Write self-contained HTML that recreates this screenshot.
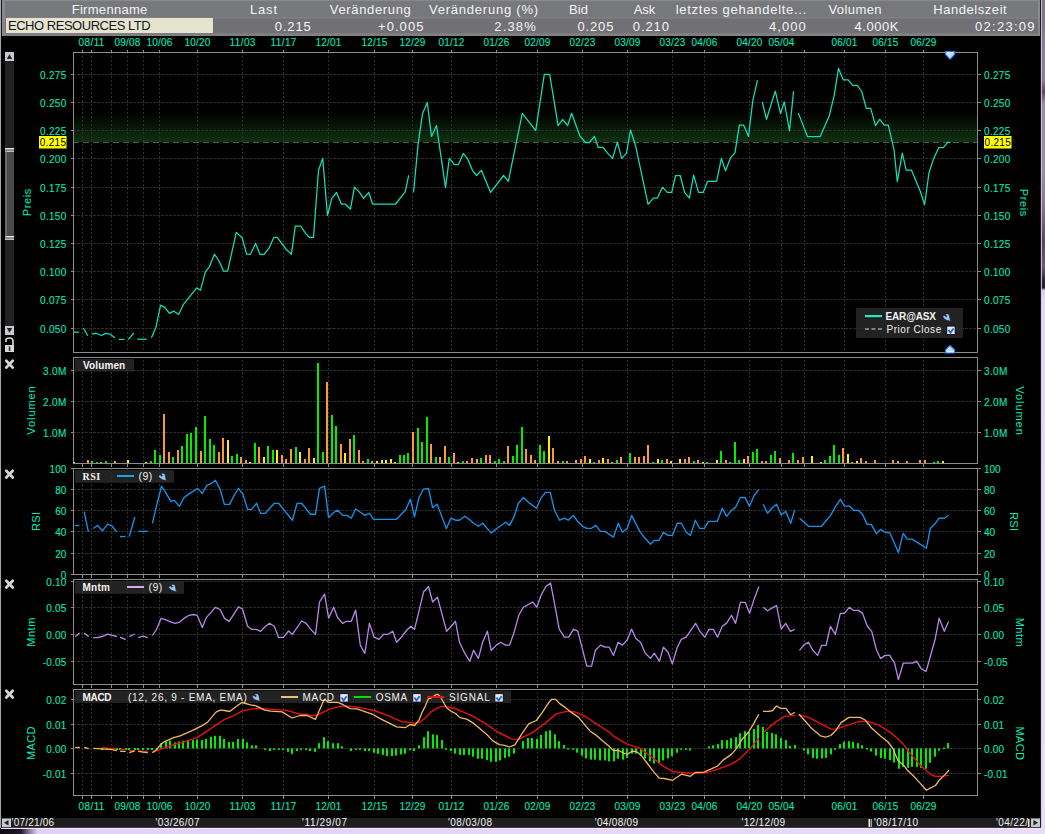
<!DOCTYPE html>
<html><head><meta charset="utf-8"><style>
html,body{margin:0;padding:0;background:#000;width:1045px;height:834px;overflow:hidden}
svg{display:block}
</style></head><body>
<svg width="1045" height="834" viewBox="0 0 1045 834">
<rect x="0" y="0" width="1045" height="834" fill="#000"/>
<defs><linearGradient id="rs" x1="0" y1="0" x2="0" y2="1"><stop offset="0" stop-color="#7a7880"/><stop offset="0.036" stop-color="#7e7888"/><stop offset="0.045" stop-color="#8a7c98"/><stop offset="0.095" stop-color="#8c7e9a"/><stop offset="0.11" stop-color="#5e4864"/><stop offset="0.125" stop-color="#9a8eaa"/><stop offset="0.2" stop-color="#9a8eaa"/><stop offset="0.24" stop-color="#8a7a98"/><stop offset="0.29" stop-color="#5a4462"/><stop offset="0.32" stop-color="#6a5a74"/><stop offset="0.337" stop-color="#2a2032"/><stop offset="0.345" stop-color="#241c2c"/><stop offset="0.348" stop-color="#d8c8f0"/><stop offset="0.36" stop-color="#e4d8f8"/><stop offset="1" stop-color="#e8def8"/></linearGradient><linearGradient id="gb" x1="0" y1="0" x2="0" y2="1"><stop offset="0" stop-color="#0f300f" stop-opacity="0"/><stop offset="1" stop-color="#0f320f" stop-opacity="1"/></linearGradient><linearGradient id="bs" x1="0" y1="0" x2="1" y2="0"><stop offset="0" stop-color="#0a0610"/><stop offset="0.02" stop-color="#201830"/><stop offset="0.028" stop-color="#8878a0"/><stop offset="0.036" stop-color="#e0d0f8"/><stop offset="1" stop-color="#e8dcf8"/></linearGradient></defs>
<rect x="1040" y="0" width="5" height="834" fill="url(#rs)"/>
<rect x="1040" y="0" width="1" height="828" fill="#1c1a22"/>
<rect x="1041" y="0" width="1" height="834" fill="#d4cce0" opacity="0.85"/>
<rect x="0" y="828" width="1045" height="6" fill="url(#bs)"/>
<rect x="0" y="0" width="1" height="828" fill="#aaa6b2"/>
<rect x="1" y="0" width="1" height="36" fill="#1a1820"/>
<rect x="2" y="0" width="1038" height="36" fill="#88898d"/>
<rect x="5" y="1.2" width="1033" height="16.3" fill="#77787c"/>
<rect x="5" y="17.5" width="1033" height="1" fill="#808084"/>
<rect x="5" y="18.5" width="1033" height="14.5" fill="#717175"/>
<rect x="5" y="33" width="1033" height="2.5" fill="#7e7e82"/>
<rect x="6" y="18" width="207" height="15" fill="#e6e4cc"/>
<text x="109.5" y="14" font-family="Liberation Sans" font-size="13" fill="#f4f4f4" text-anchor="middle" font-weight="normal" textLength="75.7" lengthAdjust="spacing" >Firmenname</text>
<text x="263.5" y="14" font-family="Liberation Sans" font-size="13" fill="#f4f4f4" text-anchor="middle" font-weight="normal" textLength="27" lengthAdjust="spacing" >Last</text>
<text x="370.3" y="14" font-family="Liberation Sans" font-size="13" fill="#f4f4f4" text-anchor="middle" font-weight="normal" textLength="81" lengthAdjust="spacing" >Veränderung</text>
<text x="483.5" y="14" font-family="Liberation Sans" font-size="13" fill="#f4f4f4" text-anchor="middle" font-weight="normal" textLength="109.2" lengthAdjust="spacing" >Veränderung (%)</text>
<text x="578.5" y="14" font-family="Liberation Sans" font-size="13" fill="#f4f4f4" text-anchor="middle" font-weight="normal" textLength="18.8" lengthAdjust="spacing" >Bid</text>
<text x="644.5" y="14" font-family="Liberation Sans" font-size="13" fill="#f4f4f4" text-anchor="middle" font-weight="normal" textLength="21.4" lengthAdjust="spacing" >Ask</text>
<text x="741" y="14" font-family="Liberation Sans" font-size="13" fill="#f4f4f4" text-anchor="middle" font-weight="normal" textLength="130.5" lengthAdjust="spacing" >letztes gehandelte...</text>
<text x="855" y="14" font-family="Liberation Sans" font-size="13" fill="#f4f4f4" text-anchor="middle" font-weight="normal" textLength="53.1" lengthAdjust="spacing" >Volumen</text>
<text x="970" y="14" font-family="Liberation Sans" font-size="13" fill="#f4f4f4" text-anchor="middle" font-weight="normal" textLength="73.4" lengthAdjust="spacing" >Handelszeit</text>
<text x="310.7" y="31" font-family="Liberation Sans" font-size="13" fill="#f4f4f4" text-anchor="end" font-weight="normal" textLength="35.9" lengthAdjust="spacing" >0.215</text>
<text x="423.4" y="31" font-family="Liberation Sans" font-size="13" fill="#f4f4f4" text-anchor="end" font-weight="normal" textLength="45.4" lengthAdjust="spacing" >+0.005</text>
<text x="535.7" y="31" font-family="Liberation Sans" font-size="13" fill="#f4f4f4" text-anchor="end" font-weight="normal" textLength="41.4" lengthAdjust="spacing" >2.38%</text>
<text x="613.4" y="31" font-family="Liberation Sans" font-size="13" fill="#f4f4f4" text-anchor="end" font-weight="normal" textLength="35.9" lengthAdjust="spacing" >0.205</text>
<text x="669" y="31" font-family="Liberation Sans" font-size="13" fill="#f4f4f4" text-anchor="end" font-weight="normal" textLength="36.2" lengthAdjust="spacing" >0.210</text>
<text x="805.7" y="31" font-family="Liberation Sans" font-size="13" fill="#f4f4f4" text-anchor="end" font-weight="normal" textLength="36.7" lengthAdjust="spacing" >4,000</text>
<text x="898.3" y="31" font-family="Liberation Sans" font-size="13" fill="#f4f4f4" text-anchor="end" font-weight="normal" textLength="43.7" lengthAdjust="spacing" >4.000K</text>
<text x="1034.5" y="31" font-family="Liberation Sans" font-size="13" fill="#f4f4f4" text-anchor="end" font-weight="normal" textLength="59.4" lengthAdjust="spacing" >02:23:09</text>
<text x="8" y="30" font-family="Liberation Sans" font-size="13" fill="#141428" text-anchor="start" font-weight="normal" textLength="142.7" lengthAdjust="spacing" >ECHO RESOURCES LTD</text>
<rect x="74" y="112" width="903" height="30" fill="url(#gb)"/>
<path d="M82.5,53 V352.5 M91.5,53 V352.5 M111.5,53 V352.5 M127.5,53 V352.5 M143.5,53 V352.5 M159.5,53 V352.5 M197.5,53 V352.5 M242.5,53 V352.5 M283.5,53 V352.5 M328.5,53 V352.5 M374.5,53 V352.5 M412.5,53 V352.5 M451.5,53 V352.5 M496.5,53 V352.5 M537.5,53 V352.5 M582.5,53 V352.5 M627.5,53 V352.5 M672.5,53 V352.5 M704.5,53 V352.5 M749.5,53 V352.5 M781.5,53 V352.5 M804.5,53 V352.5 M844.5,53 V352.5 M885.5,53 V352.5 M923.5,53 V352.5" stroke="#303030" stroke-width="1" stroke-dasharray="2,2" stroke-dashoffset="1" shape-rendering="crispEdges" fill="none"/>
<path d="M74,74.5 H977 M74,102.5 H977 M74,130.5 H977 M74,158.5 H977 M74,187.5 H977 M74,215.5 H977 M74,243.5 H977 M74,271.5 H977 M74,299.5 H977 M74,328.5 H977" stroke="#2c2c2c" stroke-width="1" stroke-dasharray="3,1" stroke-dashoffset="1" shape-rendering="crispEdges" fill="none"/>
<path d="M82.5,358 V463.5 M91.5,358 V463.5 M111.5,358 V463.5 M127.5,358 V463.5 M143.5,358 V463.5 M159.5,358 V463.5 M197.5,358 V463.5 M242.5,358 V463.5 M283.5,358 V463.5 M328.5,358 V463.5 M374.5,358 V463.5 M412.5,358 V463.5 M451.5,358 V463.5 M496.5,358 V463.5 M537.5,358 V463.5 M582.5,358 V463.5 M627.5,358 V463.5 M672.5,358 V463.5 M704.5,358 V463.5 M749.5,358 V463.5 M781.5,358 V463.5 M804.5,358 V463.5 M844.5,358 V463.5 M885.5,358 V463.5 M923.5,358 V463.5" stroke="#303030" stroke-width="1" stroke-dasharray="2,2" stroke-dashoffset="2" shape-rendering="crispEdges" fill="none"/>
<path d="M74,370.5 H977 M74,401.5 H977 M74,432.5 H977" stroke="#2c2c2c" stroke-width="1" stroke-dasharray="3,1" stroke-dashoffset="1" shape-rendering="crispEdges" fill="none"/>
<path d="M82.5,469 V574.5 M91.5,469 V574.5 M111.5,469 V574.5 M127.5,469 V574.5 M143.5,469 V574.5 M159.5,469 V574.5 M197.5,469 V574.5 M242.5,469 V574.5 M283.5,469 V574.5 M328.5,469 V574.5 M374.5,469 V574.5 M412.5,469 V574.5 M451.5,469 V574.5 M496.5,469 V574.5 M537.5,469 V574.5 M582.5,469 V574.5 M627.5,469 V574.5 M672.5,469 V574.5 M704.5,469 V574.5 M749.5,469 V574.5 M781.5,469 V574.5 M804.5,469 V574.5 M844.5,469 V574.5 M885.5,469 V574.5 M923.5,469 V574.5" stroke="#303030" stroke-width="1" stroke-dasharray="2,2" stroke-dashoffset="1" shape-rendering="crispEdges" fill="none"/>
<path d="M74,489.5 H977 M74,510.5 H977 M74,531.5 H977 M74,553.5 H977" stroke="#2c2c2c" stroke-width="1" stroke-dasharray="3,1" stroke-dashoffset="1" shape-rendering="crispEdges" fill="none"/>
<path d="M82.5,580 V684.5 M91.5,580 V684.5 M111.5,580 V684.5 M127.5,580 V684.5 M143.5,580 V684.5 M159.5,580 V684.5 M197.5,580 V684.5 M242.5,580 V684.5 M283.5,580 V684.5 M328.5,580 V684.5 M374.5,580 V684.5 M412.5,580 V684.5 M451.5,580 V684.5 M496.5,580 V684.5 M537.5,580 V684.5 M582.5,580 V684.5 M627.5,580 V684.5 M672.5,580 V684.5 M704.5,580 V684.5 M749.5,580 V684.5 M781.5,580 V684.5 M804.5,580 V684.5 M844.5,580 V684.5 M885.5,580 V684.5 M923.5,580 V684.5" stroke="#303030" stroke-width="1" stroke-dasharray="2,2" stroke-dashoffset="0" shape-rendering="crispEdges" fill="none"/>
<path d="M74,581.5 H977 M74,607.5 H977 M74,634.5 H977 M74,661.5 H977" stroke="#2c2c2c" stroke-width="1" stroke-dasharray="3,1" stroke-dashoffset="1" shape-rendering="crispEdges" fill="none"/>
<path d="M82.5,690 V795.5 M91.5,690 V795.5 M111.5,690 V795.5 M127.5,690 V795.5 M143.5,690 V795.5 M159.5,690 V795.5 M197.5,690 V795.5 M242.5,690 V795.5 M283.5,690 V795.5 M328.5,690 V795.5 M374.5,690 V795.5 M412.5,690 V795.5 M451.5,690 V795.5 M496.5,690 V795.5 M537.5,690 V795.5 M582.5,690 V795.5 M627.5,690 V795.5 M672.5,690 V795.5 M704.5,690 V795.5 M749.5,690 V795.5 M781.5,690 V795.5 M804.5,690 V795.5 M844.5,690 V795.5 M885.5,690 V795.5 M923.5,690 V795.5" stroke="#303030" stroke-width="1" stroke-dasharray="2,2" stroke-dashoffset="2" shape-rendering="crispEdges" fill="none"/>
<path d="M74,699.5 H977 M74,724.5 H977 M74,748.5 H977 M74,773.5 H977" stroke="#2c2c2c" stroke-width="1" stroke-dasharray="3,1" stroke-dashoffset="1" shape-rendering="crispEdges" fill="none"/>
<path d="M74,142.5 H977" stroke="#555" stroke-width="1" stroke-dasharray="6,4" stroke-dashoffset="1" shape-rendering="crispEdges"/>
<rect x="73.5" y="52.5" width="904.0" height="300.0" fill="none" stroke="#8c8c8c" stroke-width="1" shape-rendering="crispEdges"/>
<path d="M70.5,74.5 H73.5 M977.5,74.5 H980.5 M70.5,102.5 H73.5 M977.5,102.5 H980.5 M70.5,130.5 H73.5 M977.5,130.5 H980.5 M70.5,158.5 H73.5 M977.5,158.5 H980.5 M70.5,187.5 H73.5 M977.5,187.5 H980.5 M70.5,215.5 H73.5 M977.5,215.5 H980.5 M70.5,243.5 H73.5 M977.5,243.5 H980.5 M70.5,271.5 H73.5 M977.5,271.5 H980.5 M70.5,299.5 H73.5 M977.5,299.5 H980.5 M70.5,328.5 H73.5 M977.5,328.5 H980.5" stroke="#8c8c8c" stroke-width="1" shape-rendering="crispEdges"/>
<text x="66.3" y="78.6" font-family="Liberation Sans" font-size="10" fill="#00ecbc" text-anchor="end" font-weight="normal" textLength="26.3" lengthAdjust="spacing" stroke="#00ecbc" stroke-width="0.08" >0.275</text>
<text x="984" y="78.6" font-family="Liberation Sans" font-size="10" fill="#00ecbc" text-anchor="start" font-weight="normal" textLength="26.3" lengthAdjust="spacing" stroke="#00ecbc" stroke-width="0.08" >0.275</text>
<text x="66.3" y="106.6" font-family="Liberation Sans" font-size="10" fill="#00ecbc" text-anchor="end" font-weight="normal" textLength="26.3" lengthAdjust="spacing" stroke="#00ecbc" stroke-width="0.08" >0.250</text>
<text x="984" y="106.6" font-family="Liberation Sans" font-size="10" fill="#00ecbc" text-anchor="start" font-weight="normal" textLength="26.3" lengthAdjust="spacing" stroke="#00ecbc" stroke-width="0.08" >0.250</text>
<text x="66.3" y="134.6" font-family="Liberation Sans" font-size="10" fill="#00ecbc" text-anchor="end" font-weight="normal" textLength="26.3" lengthAdjust="spacing" stroke="#00ecbc" stroke-width="0.08" >0.225</text>
<text x="984" y="134.6" font-family="Liberation Sans" font-size="10" fill="#00ecbc" text-anchor="start" font-weight="normal" textLength="26.3" lengthAdjust="spacing" stroke="#00ecbc" stroke-width="0.08" >0.225</text>
<text x="66.3" y="162.6" font-family="Liberation Sans" font-size="10" fill="#00ecbc" text-anchor="end" font-weight="normal" textLength="26.3" lengthAdjust="spacing" stroke="#00ecbc" stroke-width="0.08" >0.200</text>
<text x="984" y="162.6" font-family="Liberation Sans" font-size="10" fill="#00ecbc" text-anchor="start" font-weight="normal" textLength="26.3" lengthAdjust="spacing" stroke="#00ecbc" stroke-width="0.08" >0.200</text>
<text x="66.3" y="191.6" font-family="Liberation Sans" font-size="10" fill="#00ecbc" text-anchor="end" font-weight="normal" textLength="26.3" lengthAdjust="spacing" stroke="#00ecbc" stroke-width="0.08" >0.175</text>
<text x="984" y="191.6" font-family="Liberation Sans" font-size="10" fill="#00ecbc" text-anchor="start" font-weight="normal" textLength="26.3" lengthAdjust="spacing" stroke="#00ecbc" stroke-width="0.08" >0.175</text>
<text x="66.3" y="219.6" font-family="Liberation Sans" font-size="10" fill="#00ecbc" text-anchor="end" font-weight="normal" textLength="26.3" lengthAdjust="spacing" stroke="#00ecbc" stroke-width="0.08" >0.150</text>
<text x="984" y="219.6" font-family="Liberation Sans" font-size="10" fill="#00ecbc" text-anchor="start" font-weight="normal" textLength="26.3" lengthAdjust="spacing" stroke="#00ecbc" stroke-width="0.08" >0.150</text>
<text x="66.3" y="247.6" font-family="Liberation Sans" font-size="10" fill="#00ecbc" text-anchor="end" font-weight="normal" textLength="26.3" lengthAdjust="spacing" stroke="#00ecbc" stroke-width="0.08" >0.125</text>
<text x="984" y="247.6" font-family="Liberation Sans" font-size="10" fill="#00ecbc" text-anchor="start" font-weight="normal" textLength="26.3" lengthAdjust="spacing" stroke="#00ecbc" stroke-width="0.08" >0.125</text>
<text x="66.3" y="275.6" font-family="Liberation Sans" font-size="10" fill="#00ecbc" text-anchor="end" font-weight="normal" textLength="26.3" lengthAdjust="spacing" stroke="#00ecbc" stroke-width="0.08" >0.100</text>
<text x="984" y="275.6" font-family="Liberation Sans" font-size="10" fill="#00ecbc" text-anchor="start" font-weight="normal" textLength="26.3" lengthAdjust="spacing" stroke="#00ecbc" stroke-width="0.08" >0.100</text>
<text x="66.3" y="303.6" font-family="Liberation Sans" font-size="10" fill="#00ecbc" text-anchor="end" font-weight="normal" textLength="26.3" lengthAdjust="spacing" stroke="#00ecbc" stroke-width="0.08" >0.075</text>
<text x="984" y="303.6" font-family="Liberation Sans" font-size="10" fill="#00ecbc" text-anchor="start" font-weight="normal" textLength="26.3" lengthAdjust="spacing" stroke="#00ecbc" stroke-width="0.08" >0.075</text>
<text x="66.3" y="332.6" font-family="Liberation Sans" font-size="10" fill="#00ecbc" text-anchor="end" font-weight="normal" textLength="26.3" lengthAdjust="spacing" stroke="#00ecbc" stroke-width="0.08" >0.050</text>
<text x="984" y="332.6" font-family="Liberation Sans" font-size="10" fill="#00ecbc" text-anchor="start" font-weight="normal" textLength="26.3" lengthAdjust="spacing" stroke="#00ecbc" stroke-width="0.08" >0.050</text>
<rect x="73.5" y="357.5" width="904.0" height="106.0" fill="none" stroke="#8c8c8c" stroke-width="1" shape-rendering="crispEdges"/>
<path d="M70.5,370.5 H73.5 M977.5,370.5 H980.5 M70.5,401.5 H73.5 M977.5,401.5 H980.5 M70.5,432.5 H73.5 M977.5,432.5 H980.5" stroke="#8c8c8c" stroke-width="1" shape-rendering="crispEdges"/>
<text x="66.3" y="374.6" font-family="Liberation Sans" font-size="10" fill="#00ecbc" text-anchor="end" font-weight="normal" textLength="23.3" lengthAdjust="spacing" stroke="#00ecbc" stroke-width="0.08" >3.0M</text>
<text x="984" y="374.6" font-family="Liberation Sans" font-size="10" fill="#00ecbc" text-anchor="start" font-weight="normal" textLength="23.3" lengthAdjust="spacing" stroke="#00ecbc" stroke-width="0.08" >3.0M</text>
<text x="66.3" y="405.6" font-family="Liberation Sans" font-size="10" fill="#00ecbc" text-anchor="end" font-weight="normal" textLength="23.3" lengthAdjust="spacing" stroke="#00ecbc" stroke-width="0.08" >2.0M</text>
<text x="984" y="405.6" font-family="Liberation Sans" font-size="10" fill="#00ecbc" text-anchor="start" font-weight="normal" textLength="23.3" lengthAdjust="spacing" stroke="#00ecbc" stroke-width="0.08" >2.0M</text>
<text x="66.3" y="436.6" font-family="Liberation Sans" font-size="10" fill="#00ecbc" text-anchor="end" font-weight="normal" textLength="23.3" lengthAdjust="spacing" stroke="#00ecbc" stroke-width="0.08" >1.0M</text>
<text x="984" y="436.6" font-family="Liberation Sans" font-size="10" fill="#00ecbc" text-anchor="start" font-weight="normal" textLength="23.3" lengthAdjust="spacing" stroke="#00ecbc" stroke-width="0.08" >1.0M</text>
<rect x="73.5" y="468.5" width="904.0" height="106.0" fill="none" stroke="#8c8c8c" stroke-width="1" shape-rendering="crispEdges"/>
<path d="M70.5,468.5 H73.5 M977.5,468.5 H980.5 M70.5,489.5 H73.5 M977.5,489.5 H980.5 M70.5,510.5 H73.5 M977.5,510.5 H980.5 M70.5,531.5 H73.5 M977.5,531.5 H980.5 M70.5,553.5 H73.5 M977.5,553.5 H980.5 M70.5,574.5 H73.5 M977.5,574.5 H980.5" stroke="#8c8c8c" stroke-width="1" shape-rendering="crispEdges"/>
<text x="66.3" y="472.6" font-family="Liberation Sans" font-size="10" fill="#00ecbc" text-anchor="end" font-weight="normal" stroke="#00ecbc" stroke-width="0.08" >100</text>
<text x="984" y="472.6" font-family="Liberation Sans" font-size="10" fill="#00ecbc" text-anchor="start" font-weight="normal" stroke="#00ecbc" stroke-width="0.08" >100</text>
<text x="66.3" y="493.6" font-family="Liberation Sans" font-size="10" fill="#00ecbc" text-anchor="end" font-weight="normal" stroke="#00ecbc" stroke-width="0.08" >80</text>
<text x="984" y="493.6" font-family="Liberation Sans" font-size="10" fill="#00ecbc" text-anchor="start" font-weight="normal" stroke="#00ecbc" stroke-width="0.08" >80</text>
<text x="66.3" y="514.6" font-family="Liberation Sans" font-size="10" fill="#00ecbc" text-anchor="end" font-weight="normal" stroke="#00ecbc" stroke-width="0.08" >60</text>
<text x="984" y="514.6" font-family="Liberation Sans" font-size="10" fill="#00ecbc" text-anchor="start" font-weight="normal" stroke="#00ecbc" stroke-width="0.08" >60</text>
<text x="66.3" y="535.6" font-family="Liberation Sans" font-size="10" fill="#00ecbc" text-anchor="end" font-weight="normal" stroke="#00ecbc" stroke-width="0.08" >40</text>
<text x="984" y="535.6" font-family="Liberation Sans" font-size="10" fill="#00ecbc" text-anchor="start" font-weight="normal" stroke="#00ecbc" stroke-width="0.08" >40</text>
<text x="66.3" y="557.6" font-family="Liberation Sans" font-size="10" fill="#00ecbc" text-anchor="end" font-weight="normal" stroke="#00ecbc" stroke-width="0.08" >20</text>
<text x="984" y="557.6" font-family="Liberation Sans" font-size="10" fill="#00ecbc" text-anchor="start" font-weight="normal" stroke="#00ecbc" stroke-width="0.08" >20</text>
<text x="66.3" y="578.6" font-family="Liberation Sans" font-size="10" fill="#00ecbc" text-anchor="end" font-weight="normal" stroke="#00ecbc" stroke-width="0.08" >0</text>
<text x="984" y="578.6" font-family="Liberation Sans" font-size="10" fill="#00ecbc" text-anchor="start" font-weight="normal" stroke="#00ecbc" stroke-width="0.08" >0</text>
<rect x="73.5" y="579.5" width="904.0" height="105.0" fill="none" stroke="#8c8c8c" stroke-width="1" shape-rendering="crispEdges"/>
<path d="M70.5,581.5 H73.5 M977.5,581.5 H980.5 M70.5,607.5 H73.5 M977.5,607.5 H980.5 M70.5,634.5 H73.5 M977.5,634.5 H980.5 M70.5,661.5 H73.5 M977.5,661.5 H980.5" stroke="#8c8c8c" stroke-width="1" shape-rendering="crispEdges"/>
<text x="66.3" y="585.6" font-family="Liberation Sans" font-size="10" fill="#00ecbc" text-anchor="end" font-weight="normal" textLength="20.1" lengthAdjust="spacing" stroke="#00ecbc" stroke-width="0.08" >0.10</text>
<text x="984" y="585.6" font-family="Liberation Sans" font-size="10" fill="#00ecbc" text-anchor="start" font-weight="normal" textLength="20.1" lengthAdjust="spacing" stroke="#00ecbc" stroke-width="0.08" >0.10</text>
<text x="66.3" y="611.6" font-family="Liberation Sans" font-size="10" fill="#00ecbc" text-anchor="end" font-weight="normal" textLength="20.1" lengthAdjust="spacing" stroke="#00ecbc" stroke-width="0.08" >0.05</text>
<text x="984" y="611.6" font-family="Liberation Sans" font-size="10" fill="#00ecbc" text-anchor="start" font-weight="normal" textLength="20.1" lengthAdjust="spacing" stroke="#00ecbc" stroke-width="0.08" >0.05</text>
<text x="66.3" y="638.6" font-family="Liberation Sans" font-size="10" fill="#00ecbc" text-anchor="end" font-weight="normal" textLength="20.1" lengthAdjust="spacing" stroke="#00ecbc" stroke-width="0.08" >0.00</text>
<text x="984" y="638.6" font-family="Liberation Sans" font-size="10" fill="#00ecbc" text-anchor="start" font-weight="normal" textLength="20.1" lengthAdjust="spacing" stroke="#00ecbc" stroke-width="0.08" >0.00</text>
<text x="66.3" y="665.6" font-family="Liberation Sans" font-size="10" fill="#00ecbc" text-anchor="end" font-weight="normal" textLength="23.5" lengthAdjust="spacing" stroke="#00ecbc" stroke-width="0.08" >-0.05</text>
<text x="984" y="665.6" font-family="Liberation Sans" font-size="10" fill="#00ecbc" text-anchor="start" font-weight="normal" textLength="23.5" lengthAdjust="spacing" stroke="#00ecbc" stroke-width="0.08" >-0.05</text>
<rect x="73.5" y="689.5" width="904.0" height="106.0" fill="none" stroke="#8c8c8c" stroke-width="1" shape-rendering="crispEdges"/>
<path d="M70.5,699.5 H73.5 M977.5,699.5 H980.5 M70.5,724.5 H73.5 M977.5,724.5 H980.5 M70.5,748.5 H73.5 M977.5,748.5 H980.5 M70.5,773.5 H73.5 M977.5,773.5 H980.5" stroke="#8c8c8c" stroke-width="1" shape-rendering="crispEdges"/>
<text x="66.3" y="703.6" font-family="Liberation Sans" font-size="10" fill="#00ecbc" text-anchor="end" font-weight="normal" textLength="20.1" lengthAdjust="spacing" stroke="#00ecbc" stroke-width="0.08" >0.02</text>
<text x="984" y="703.6" font-family="Liberation Sans" font-size="10" fill="#00ecbc" text-anchor="start" font-weight="normal" textLength="20.1" lengthAdjust="spacing" stroke="#00ecbc" stroke-width="0.08" >0.02</text>
<text x="66.3" y="728.6" font-family="Liberation Sans" font-size="10" fill="#00ecbc" text-anchor="end" font-weight="normal" textLength="20.1" lengthAdjust="spacing" stroke="#00ecbc" stroke-width="0.08" >0.01</text>
<text x="984" y="728.6" font-family="Liberation Sans" font-size="10" fill="#00ecbc" text-anchor="start" font-weight="normal" textLength="20.1" lengthAdjust="spacing" stroke="#00ecbc" stroke-width="0.08" >0.01</text>
<text x="66.3" y="752.6" font-family="Liberation Sans" font-size="10" fill="#00ecbc" text-anchor="end" font-weight="normal" textLength="20.1" lengthAdjust="spacing" stroke="#00ecbc" stroke-width="0.08" >0.00</text>
<text x="984" y="752.6" font-family="Liberation Sans" font-size="10" fill="#00ecbc" text-anchor="start" font-weight="normal" textLength="20.1" lengthAdjust="spacing" stroke="#00ecbc" stroke-width="0.08" >0.00</text>
<text x="66.3" y="777.6" font-family="Liberation Sans" font-size="10" fill="#00ecbc" text-anchor="end" font-weight="normal" textLength="23.5" lengthAdjust="spacing" stroke="#00ecbc" stroke-width="0.08" >-0.01</text>
<text x="984" y="777.6" font-family="Liberation Sans" font-size="10" fill="#00ecbc" text-anchor="start" font-weight="normal" textLength="23.5" lengthAdjust="spacing" stroke="#00ecbc" stroke-width="0.08" >-0.01</text>
<path d="M82.5,50 V52 M91.5,50 V52 M111.5,50 V52 M127.5,50 V52 M143.5,50 V52 M159.5,50 V52 M197.5,50 V52 M242.5,50 V52 M283.5,50 V52 M328.5,50 V52 M374.5,50 V52 M412.5,50 V52 M451.5,50 V52 M496.5,50 V52 M537.5,50 V52 M582.5,50 V52 M627.5,50 V52 M672.5,50 V52 M704.5,50 V52 M749.5,50 V52 M781.5,50 V52 M804.5,50 V52 M844.5,50 V52 M885.5,50 V52 M923.5,50 V52 M82.5,464.0 V466.5 M82.5,575.0 V577.5 M82.5,685.0 V687.5 M82.5,796.0 V798.5 M91.5,464.0 V466.5 M91.5,575.0 V577.5 M91.5,685.0 V687.5 M91.5,796.0 V798.5 M111.5,464.0 V466.5 M111.5,575.0 V577.5 M111.5,685.0 V687.5 M111.5,796.0 V798.5 M127.5,464.0 V466.5 M127.5,575.0 V577.5 M127.5,685.0 V687.5 M127.5,796.0 V798.5 M143.5,464.0 V466.5 M143.5,575.0 V577.5 M143.5,685.0 V687.5 M143.5,796.0 V798.5 M159.5,464.0 V466.5 M159.5,575.0 V577.5 M159.5,685.0 V687.5 M159.5,796.0 V798.5 M197.5,464.0 V466.5 M197.5,575.0 V577.5 M197.5,685.0 V687.5 M197.5,796.0 V798.5 M242.5,464.0 V466.5 M242.5,575.0 V577.5 M242.5,685.0 V687.5 M242.5,796.0 V798.5 M283.5,464.0 V466.5 M283.5,575.0 V577.5 M283.5,685.0 V687.5 M283.5,796.0 V798.5 M328.5,464.0 V466.5 M328.5,575.0 V577.5 M328.5,685.0 V687.5 M328.5,796.0 V798.5 M374.5,464.0 V466.5 M374.5,575.0 V577.5 M374.5,685.0 V687.5 M374.5,796.0 V798.5 M412.5,464.0 V466.5 M412.5,575.0 V577.5 M412.5,685.0 V687.5 M412.5,796.0 V798.5 M451.5,464.0 V466.5 M451.5,575.0 V577.5 M451.5,685.0 V687.5 M451.5,796.0 V798.5 M496.5,464.0 V466.5 M496.5,575.0 V577.5 M496.5,685.0 V687.5 M496.5,796.0 V798.5 M537.5,464.0 V466.5 M537.5,575.0 V577.5 M537.5,685.0 V687.5 M537.5,796.0 V798.5 M582.5,464.0 V466.5 M582.5,575.0 V577.5 M582.5,685.0 V687.5 M582.5,796.0 V798.5 M627.5,464.0 V466.5 M627.5,575.0 V577.5 M627.5,685.0 V687.5 M627.5,796.0 V798.5 M672.5,464.0 V466.5 M672.5,575.0 V577.5 M672.5,685.0 V687.5 M672.5,796.0 V798.5 M704.5,464.0 V466.5 M704.5,575.0 V577.5 M704.5,685.0 V687.5 M704.5,796.0 V798.5 M749.5,464.0 V466.5 M749.5,575.0 V577.5 M749.5,685.0 V687.5 M749.5,796.0 V798.5 M781.5,464.0 V466.5 M781.5,575.0 V577.5 M781.5,685.0 V687.5 M781.5,796.0 V798.5 M804.5,464.0 V466.5 M804.5,575.0 V577.5 M804.5,685.0 V687.5 M804.5,796.0 V798.5 M844.5,464.0 V466.5 M844.5,575.0 V577.5 M844.5,685.0 V687.5 M844.5,796.0 V798.5 M885.5,464.0 V466.5 M885.5,575.0 V577.5 M885.5,685.0 V687.5 M885.5,796.0 V798.5 M923.5,464.0 V466.5 M923.5,575.0 V577.5 M923.5,685.0 V687.5 M923.5,796.0 V798.5" stroke="#8c8c8c" stroke-width="1" shape-rendering="crispEdges"/>
<text x="91.5" y="46" font-family="Liberation Sans" font-size="10" fill="#00ecbc" text-anchor="middle" font-weight="normal" textLength="25.8" lengthAdjust="spacing" stroke="#00ecbc" stroke-width="0.08" >08/11</text>
<text x="91.5" y="809.5" font-family="Liberation Sans" font-size="10" fill="#00ecbc" text-anchor="middle" font-weight="normal" textLength="25.8" lengthAdjust="spacing" stroke="#00ecbc" stroke-width="0.08" >08/11</text>
<text x="127.5" y="46" font-family="Liberation Sans" font-size="10" fill="#00ecbc" text-anchor="middle" font-weight="normal" textLength="25.8" lengthAdjust="spacing" stroke="#00ecbc" stroke-width="0.08" >09/08</text>
<text x="127.5" y="809.5" font-family="Liberation Sans" font-size="10" fill="#00ecbc" text-anchor="middle" font-weight="normal" textLength="25.8" lengthAdjust="spacing" stroke="#00ecbc" stroke-width="0.08" >09/08</text>
<text x="159.5" y="46" font-family="Liberation Sans" font-size="10" fill="#00ecbc" text-anchor="middle" font-weight="normal" textLength="25.8" lengthAdjust="spacing" stroke="#00ecbc" stroke-width="0.08" >10/06</text>
<text x="159.5" y="809.5" font-family="Liberation Sans" font-size="10" fill="#00ecbc" text-anchor="middle" font-weight="normal" textLength="25.8" lengthAdjust="spacing" stroke="#00ecbc" stroke-width="0.08" >10/06</text>
<text x="197.5" y="46" font-family="Liberation Sans" font-size="10" fill="#00ecbc" text-anchor="middle" font-weight="normal" textLength="25.8" lengthAdjust="spacing" stroke="#00ecbc" stroke-width="0.08" >10/20</text>
<text x="197.5" y="809.5" font-family="Liberation Sans" font-size="10" fill="#00ecbc" text-anchor="middle" font-weight="normal" textLength="25.8" lengthAdjust="spacing" stroke="#00ecbc" stroke-width="0.08" >10/20</text>
<text x="242.5" y="46" font-family="Liberation Sans" font-size="10" fill="#00ecbc" text-anchor="middle" font-weight="normal" textLength="25.8" lengthAdjust="spacing" stroke="#00ecbc" stroke-width="0.08" >11/03</text>
<text x="242.5" y="809.5" font-family="Liberation Sans" font-size="10" fill="#00ecbc" text-anchor="middle" font-weight="normal" textLength="25.8" lengthAdjust="spacing" stroke="#00ecbc" stroke-width="0.08" >11/03</text>
<text x="283.5" y="46" font-family="Liberation Sans" font-size="10" fill="#00ecbc" text-anchor="middle" font-weight="normal" textLength="25.8" lengthAdjust="spacing" stroke="#00ecbc" stroke-width="0.08" >11/17</text>
<text x="283.5" y="809.5" font-family="Liberation Sans" font-size="10" fill="#00ecbc" text-anchor="middle" font-weight="normal" textLength="25.8" lengthAdjust="spacing" stroke="#00ecbc" stroke-width="0.08" >11/17</text>
<text x="328.5" y="46" font-family="Liberation Sans" font-size="10" fill="#00ecbc" text-anchor="middle" font-weight="normal" textLength="25.8" lengthAdjust="spacing" stroke="#00ecbc" stroke-width="0.08" >12/01</text>
<text x="328.5" y="809.5" font-family="Liberation Sans" font-size="10" fill="#00ecbc" text-anchor="middle" font-weight="normal" textLength="25.8" lengthAdjust="spacing" stroke="#00ecbc" stroke-width="0.08" >12/01</text>
<text x="374.5" y="46" font-family="Liberation Sans" font-size="10" fill="#00ecbc" text-anchor="middle" font-weight="normal" textLength="25.8" lengthAdjust="spacing" stroke="#00ecbc" stroke-width="0.08" >12/15</text>
<text x="374.5" y="809.5" font-family="Liberation Sans" font-size="10" fill="#00ecbc" text-anchor="middle" font-weight="normal" textLength="25.8" lengthAdjust="spacing" stroke="#00ecbc" stroke-width="0.08" >12/15</text>
<text x="412.5" y="46" font-family="Liberation Sans" font-size="10" fill="#00ecbc" text-anchor="middle" font-weight="normal" textLength="25.8" lengthAdjust="spacing" stroke="#00ecbc" stroke-width="0.08" >12/29</text>
<text x="412.5" y="809.5" font-family="Liberation Sans" font-size="10" fill="#00ecbc" text-anchor="middle" font-weight="normal" textLength="25.8" lengthAdjust="spacing" stroke="#00ecbc" stroke-width="0.08" >12/29</text>
<text x="451.5" y="46" font-family="Liberation Sans" font-size="10" fill="#00ecbc" text-anchor="middle" font-weight="normal" textLength="25.8" lengthAdjust="spacing" stroke="#00ecbc" stroke-width="0.08" >01/12</text>
<text x="451.5" y="809.5" font-family="Liberation Sans" font-size="10" fill="#00ecbc" text-anchor="middle" font-weight="normal" textLength="25.8" lengthAdjust="spacing" stroke="#00ecbc" stroke-width="0.08" >01/12</text>
<text x="496.5" y="46" font-family="Liberation Sans" font-size="10" fill="#00ecbc" text-anchor="middle" font-weight="normal" textLength="25.8" lengthAdjust="spacing" stroke="#00ecbc" stroke-width="0.08" >01/26</text>
<text x="496.5" y="809.5" font-family="Liberation Sans" font-size="10" fill="#00ecbc" text-anchor="middle" font-weight="normal" textLength="25.8" lengthAdjust="spacing" stroke="#00ecbc" stroke-width="0.08" >01/26</text>
<text x="537.5" y="46" font-family="Liberation Sans" font-size="10" fill="#00ecbc" text-anchor="middle" font-weight="normal" textLength="25.8" lengthAdjust="spacing" stroke="#00ecbc" stroke-width="0.08" >02/09</text>
<text x="537.5" y="809.5" font-family="Liberation Sans" font-size="10" fill="#00ecbc" text-anchor="middle" font-weight="normal" textLength="25.8" lengthAdjust="spacing" stroke="#00ecbc" stroke-width="0.08" >02/09</text>
<text x="582.5" y="46" font-family="Liberation Sans" font-size="10" fill="#00ecbc" text-anchor="middle" font-weight="normal" textLength="25.8" lengthAdjust="spacing" stroke="#00ecbc" stroke-width="0.08" >02/23</text>
<text x="582.5" y="809.5" font-family="Liberation Sans" font-size="10" fill="#00ecbc" text-anchor="middle" font-weight="normal" textLength="25.8" lengthAdjust="spacing" stroke="#00ecbc" stroke-width="0.08" >02/23</text>
<text x="627.5" y="46" font-family="Liberation Sans" font-size="10" fill="#00ecbc" text-anchor="middle" font-weight="normal" textLength="25.8" lengthAdjust="spacing" stroke="#00ecbc" stroke-width="0.08" >03/09</text>
<text x="627.5" y="809.5" font-family="Liberation Sans" font-size="10" fill="#00ecbc" text-anchor="middle" font-weight="normal" textLength="25.8" lengthAdjust="spacing" stroke="#00ecbc" stroke-width="0.08" >03/09</text>
<text x="672.5" y="46" font-family="Liberation Sans" font-size="10" fill="#00ecbc" text-anchor="middle" font-weight="normal" textLength="25.8" lengthAdjust="spacing" stroke="#00ecbc" stroke-width="0.08" >03/23</text>
<text x="672.5" y="809.5" font-family="Liberation Sans" font-size="10" fill="#00ecbc" text-anchor="middle" font-weight="normal" textLength="25.8" lengthAdjust="spacing" stroke="#00ecbc" stroke-width="0.08" >03/23</text>
<text x="704.5" y="46" font-family="Liberation Sans" font-size="10" fill="#00ecbc" text-anchor="middle" font-weight="normal" textLength="25.8" lengthAdjust="spacing" stroke="#00ecbc" stroke-width="0.08" >04/06</text>
<text x="704.5" y="809.5" font-family="Liberation Sans" font-size="10" fill="#00ecbc" text-anchor="middle" font-weight="normal" textLength="25.8" lengthAdjust="spacing" stroke="#00ecbc" stroke-width="0.08" >04/06</text>
<text x="749.5" y="46" font-family="Liberation Sans" font-size="10" fill="#00ecbc" text-anchor="middle" font-weight="normal" textLength="25.8" lengthAdjust="spacing" stroke="#00ecbc" stroke-width="0.08" >04/20</text>
<text x="749.5" y="809.5" font-family="Liberation Sans" font-size="10" fill="#00ecbc" text-anchor="middle" font-weight="normal" textLength="25.8" lengthAdjust="spacing" stroke="#00ecbc" stroke-width="0.08" >04/20</text>
<text x="781.5" y="46" font-family="Liberation Sans" font-size="10" fill="#00ecbc" text-anchor="middle" font-weight="normal" textLength="25.8" lengthAdjust="spacing" stroke="#00ecbc" stroke-width="0.08" >05/04</text>
<text x="781.5" y="809.5" font-family="Liberation Sans" font-size="10" fill="#00ecbc" text-anchor="middle" font-weight="normal" textLength="25.8" lengthAdjust="spacing" stroke="#00ecbc" stroke-width="0.08" >05/04</text>
<text x="844.5" y="46" font-family="Liberation Sans" font-size="10" fill="#00ecbc" text-anchor="middle" font-weight="normal" textLength="25.8" lengthAdjust="spacing" stroke="#00ecbc" stroke-width="0.08" >06/01</text>
<text x="844.5" y="809.5" font-family="Liberation Sans" font-size="10" fill="#00ecbc" text-anchor="middle" font-weight="normal" textLength="25.8" lengthAdjust="spacing" stroke="#00ecbc" stroke-width="0.08" >06/01</text>
<text x="885.5" y="46" font-family="Liberation Sans" font-size="10" fill="#00ecbc" text-anchor="middle" font-weight="normal" textLength="25.8" lengthAdjust="spacing" stroke="#00ecbc" stroke-width="0.08" >06/15</text>
<text x="885.5" y="809.5" font-family="Liberation Sans" font-size="10" fill="#00ecbc" text-anchor="middle" font-weight="normal" textLength="25.8" lengthAdjust="spacing" stroke="#00ecbc" stroke-width="0.08" >06/15</text>
<text x="923.5" y="46" font-family="Liberation Sans" font-size="10" fill="#00ecbc" text-anchor="middle" font-weight="normal" textLength="25.8" lengthAdjust="spacing" stroke="#00ecbc" stroke-width="0.08" >06/29</text>
<text x="923.5" y="809.5" font-family="Liberation Sans" font-size="10" fill="#00ecbc" text-anchor="middle" font-weight="normal" textLength="25.8" lengthAdjust="spacing" stroke="#00ecbc" stroke-width="0.08" >06/29</text>
<text transform="translate(27.4,202.5) rotate(-90)" x="0" y="0" font-family="Liberation Sans" font-size="11" fill="#00ecbc" text-anchor="middle" dominant-baseline="central" textLength="27.5" lengthAdjust="spacing">Preis</text>
<text transform="translate(1023.5,202.5) rotate(90)" x="0" y="0" font-family="Liberation Sans" font-size="11" fill="#00ecbc" text-anchor="middle" dominant-baseline="central" textLength="27.5" lengthAdjust="spacing">Preis</text>
<text transform="translate(30.6,410.5) rotate(-90)" x="0" y="0" font-family="Liberation Sans" font-size="11" fill="#00ecbc" text-anchor="middle" dominant-baseline="central" textLength="48.5" lengthAdjust="spacing">Volumen</text>
<text transform="translate(1020.4,410.5) rotate(90)" x="0" y="0" font-family="Liberation Sans" font-size="11" fill="#00ecbc" text-anchor="middle" dominant-baseline="central" textLength="48.5" lengthAdjust="spacing">Volumen</text>
<text transform="translate(36.4,521.5) rotate(-90)" x="0" y="0" font-family="Liberation Sans" font-size="11" fill="#00ecbc" text-anchor="middle" dominant-baseline="central" textLength="19" lengthAdjust="spacing">RSI</text>
<text transform="translate(1014.3,521.5) rotate(90)" x="0" y="0" font-family="Liberation Sans" font-size="11" fill="#00ecbc" text-anchor="middle" dominant-baseline="central" textLength="19" lengthAdjust="spacing">RSI</text>
<text transform="translate(30.8,632.2) rotate(-90)" x="0" y="0" font-family="Liberation Sans" font-size="11" fill="#00ecbc" text-anchor="middle" dominant-baseline="central" textLength="29" lengthAdjust="spacing">Mntm</text>
<text transform="translate(1020.3,632.2) rotate(90)" x="0" y="0" font-family="Liberation Sans" font-size="11" fill="#00ecbc" text-anchor="middle" dominant-baseline="central" textLength="29" lengthAdjust="spacing">Mntm</text>
<text transform="translate(30.8,743.2) rotate(-90)" x="0" y="0" font-family="Liberation Sans" font-size="11" fill="#00ecbc" text-anchor="middle" dominant-baseline="central" textLength="33.5" lengthAdjust="spacing">MACD</text>
<text transform="translate(1020.3,743.2) rotate(90)" x="0" y="0" font-family="Liberation Sans" font-size="11" fill="#00ecbc" text-anchor="middle" dominant-baseline="central" textLength="33.5" lengthAdjust="spacing">MACD</text>
<rect x="39" y="136" width="27.5" height="12.5" fill="#ffff00"/>
<rect x="984" y="136" width="27.5" height="12.5" fill="#ffff00"/>
<text x="66" y="146.2" font-family="Liberation Sans" font-size="10" fill="#000" text-anchor="end" font-weight="normal" textLength="26.3" lengthAdjust="spacing" >0.215</text>
<text x="984.5" y="146.2" font-family="Liberation Sans" font-size="10" fill="#000" text-anchor="start" font-weight="normal" textLength="26.3" lengthAdjust="spacing" >0.215</text>
<rect x="75" y="359" width="59" height="12.5" fill="rgba(40,40,40,0.84)"/>
<rect x="75" y="470" width="99" height="12.8" fill="rgba(40,40,40,0.84)"/>
<rect x="75" y="581" width="109" height="12.8" fill="rgba(40,40,40,0.84)"/>
<rect x="75" y="690.5" width="436" height="12.5" fill="rgba(40,40,40,0.84)"/>
<rect x="856" y="308" width="107" height="30" fill="rgba(40,40,40,0.84)"/>
<clipPath id="cp"><rect x="74" y="53" width="903" height="299"/></clipPath>
<polyline points="74.0,332.2 79.2,332.2" fill="none" stroke="#10e0b8" stroke-width="1.25" stroke-linejoin="round"/>
<polyline points="83.3,328.0 87.8,335.7" fill="none" stroke="#10e0b8" stroke-width="1.25" stroke-linejoin="round"/>
<polyline points="92.0,334.2 96.1,333.2 101.5,335.5 105.6,333.4 110.1,334.2 114.9,337.7" fill="none" stroke="#10e0b8" stroke-width="1.25" stroke-linejoin="round"/>
<polyline points="118.8,339.4 124.5,339.4" fill="none" stroke="#10e0b8" stroke-width="1.25" stroke-linejoin="round"/>
<polyline points="128.3,339.4 133.8,333.0" fill="none" stroke="#10e0b8" stroke-width="1.25" stroke-linejoin="round"/>
<polyline points="137.3,339.2 146.6,339.2" fill="none" stroke="#10e0b8" stroke-width="1.25" stroke-linejoin="round"/>
<polyline points="151.4,337.7 155.9,327.4 160.6,305.2 164.8,307.4 169.5,313.4 173.6,311.1 178.6,314.4 183.3,304.7 196.7,287.8 200.4,290.3 205.4,271.8 209.5,266.6 214.4,254.2 219.0,261.0 223.5,271.1 227.6,271.1 236.3,232.4 242.1,237.7 246.6,254.2 250.4,254.3 255.6,243.4 260.0,254.3 264.2,254.3 269.0,248.2 273.8,237.4 277.2,237.4 286.3,249.5 291.4,254.3 295.3,226.1 300.7,226.1 305.4,233.2 309.3,237.4 313.5,237.4 318.5,170.3 322.7,158.4 327.5,215.5 331.7,198.7 336.5,192.5 341.3,204.0 345.2,204.0 350.5,209.2 354.4,187.1 359.2,191.9 363.6,198.3 368.8,192.5 372.6,204.0 395.6,204.0 405.2,191.9 408.7,175.3" fill="none" stroke="#10e0b8" stroke-width="1.25" stroke-linejoin="round"/>
<polyline points="413.5,192.4 418.1,144.4 422.5,113.7 427.3,102.6 431.5,136.4 436.5,125.6 445.5,187.6 449.3,158.4 454.5,164.6 458.4,164.6 463.3,153.4 467.6,158.8 472.4,170.3 476.6,175.5 481.4,170.3 490.6,192.4 503.6,175.5 508.3,181.3 522.3,113.3 535.7,130.6 544.3,74.4 549.7,74.4 558.1,125.6 562.6,119.5 567.7,125.6 571.6,113.3 579.8,135.8 585.4,142.5 589.6,142.5 594.4,136.4 598.2,147.3 603.0,147.3 607.8,153.4 612.6,158.4 617.4,142.1 621.6,158.4 626.4,153.4 630.5,130.0 635.7,146.3 648.1,204.3 653.5,198.1 657.3,198.1 662.5,187.2 667.3,192.4 671.7,192.4 675.6,175.5 680.2,175.5 684.6,192.4 689.4,198.1 693.6,175.1 698.6,192.4 703.2,192.4 707.6,181.3 716.6,181.3 721.4,158.4 725.5,170.7 730.3,158.4 735.0,152.7 739.3,125.2 743.7,125.2 748.5,136.4 752.7,101.2 757.5,80.1" fill="none" stroke="#10e0b8" stroke-width="1.25" stroke-linejoin="round"/>
<polyline points="762.3,102.0 766.5,119.3 775.3,91.1 780.5,113.5 784.3,102.0 789.5,130.8 793.6,91.1" fill="none" stroke="#10e0b8" stroke-width="1.25" stroke-linejoin="round"/>
<polyline points="798.3,112.9 807.4,136.5 820.2,136.5 829.4,115.4 834.2,95.3 838.5,68.4 843.3,79.9 848.2,79.9 852.8,85.3 857.3,85.3 861.7,91.5 866.3,108.3 870.7,108.3 875.5,125.6 879.7,119.3 884.3,125.1 888.3,125.1 891.5,138.8 894.1,150.3 897.3,181.7 902.3,153.2 906.2,170.1 911.4,170.1 920.3,191.3 924.6,204.7 928.9,173.3 933.5,158.9 938.7,147.7 943.3,147.7 947.6,142.4 950.5,142.4" fill="none" stroke="#10e0b8" stroke-width="1.25" stroke-linejoin="round"/>
<rect x="73" y="462" width="2" height="1" fill="#ffee00"/>
<rect x="87" y="460" width="2" height="3" fill="#ff9933"/>
<rect x="91" y="461" width="2" height="2" fill="#00ee00"/>
<rect x="96" y="462" width="2" height="1" fill="#00ee00"/>
<rect x="100" y="462" width="2" height="1" fill="#ff9933"/>
<rect x="105" y="461" width="2" height="2" fill="#00ee00"/>
<rect x="114" y="461" width="2" height="2" fill="#ff9933"/>
<rect x="127" y="460" width="2" height="3" fill="#ffee00"/>
<rect x="145" y="462" width="2" height="1" fill="#ffee00"/>
<rect x="150" y="461" width="2" height="2" fill="#00ee00"/>
<rect x="154" y="450" width="2" height="13" fill="#00ee00"/>
<rect x="159" y="455" width="2" height="8" fill="#00ee00"/>
<rect x="163" y="414" width="2" height="49" fill="#ff9933"/>
<rect x="168" y="452" width="2" height="11" fill="#ff9933"/>
<rect x="172" y="457" width="2" height="6" fill="#00ee00"/>
<rect x="177" y="450" width="2" height="13" fill="#ff9933"/>
<rect x="181" y="446" width="2" height="17" fill="#00ee00"/>
<rect x="186" y="434" width="2" height="29" fill="#00ee00"/>
<rect x="190" y="433" width="2" height="30" fill="#00ee00"/>
<rect x="195" y="427" width="2" height="36" fill="#00ee00"/>
<rect x="200" y="451" width="2" height="12" fill="#ff9933"/>
<rect x="204" y="416" width="2" height="47" fill="#00ee00"/>
<rect x="209" y="439" width="2" height="24" fill="#00ee00"/>
<rect x="213" y="445" width="2" height="18" fill="#00ee00"/>
<rect x="218" y="452" width="2" height="11" fill="#ff9933"/>
<rect x="222" y="438" width="2" height="25" fill="#ff9933"/>
<rect x="227" y="440" width="2" height="23" fill="#ffee00"/>
<rect x="231" y="456" width="2" height="7" fill="#00ee00"/>
<rect x="236" y="454" width="2" height="9" fill="#00ee00"/>
<rect x="240" y="457" width="2" height="6" fill="#ff9933"/>
<rect x="245" y="460" width="2" height="3" fill="#ff9933"/>
<rect x="249" y="462" width="2" height="1" fill="#ffee00"/>
<rect x="254" y="443" width="2" height="20" fill="#00ee00"/>
<rect x="258" y="447" width="2" height="16" fill="#ff9933"/>
<rect x="263" y="457" width="2" height="6" fill="#ffee00"/>
<rect x="267" y="446" width="2" height="17" fill="#00ee00"/>
<rect x="272" y="450" width="2" height="13" fill="#00ee00"/>
<rect x="276" y="450" width="2" height="13" fill="#ffee00"/>
<rect x="281" y="455" width="2" height="8" fill="#ff9933"/>
<rect x="285" y="459" width="2" height="4" fill="#ff9933"/>
<rect x="290" y="449" width="2" height="14" fill="#ff9933"/>
<rect x="295" y="447" width="2" height="16" fill="#00ee00"/>
<rect x="299" y="452" width="2" height="11" fill="#ffee00"/>
<rect x="304" y="459" width="2" height="4" fill="#ff9933"/>
<rect x="308" y="448" width="2" height="15" fill="#ff9933"/>
<rect x="313" y="458" width="2" height="5" fill="#ffee00"/>
<rect x="317" y="363" width="2" height="100" fill="#00ee00"/>
<rect x="322" y="452" width="2" height="11" fill="#00ee00"/>
<rect x="326" y="382" width="2" height="81" fill="#ff9933"/>
<rect x="331" y="415" width="2" height="48" fill="#00ee00"/>
<rect x="335" y="426" width="2" height="37" fill="#00ee00"/>
<rect x="340" y="444" width="2" height="19" fill="#ff9933"/>
<rect x="344" y="453" width="2" height="10" fill="#ffee00"/>
<rect x="349" y="439" width="2" height="24" fill="#ff9933"/>
<rect x="353" y="435" width="2" height="28" fill="#00ee00"/>
<rect x="358" y="450" width="2" height="13" fill="#ff9933"/>
<rect x="362" y="461" width="2" height="2" fill="#ff9933"/>
<rect x="367" y="459" width="2" height="4" fill="#00ee00"/>
<rect x="371" y="461" width="2" height="2" fill="#ff9933"/>
<rect x="376" y="461" width="2" height="2" fill="#ffee00"/>
<rect x="381" y="460" width="2" height="3" fill="#ffee00"/>
<rect x="385" y="460" width="2" height="3" fill="#ffee00"/>
<rect x="390" y="459" width="2" height="4" fill="#ffee00"/>
<rect x="394" y="462" width="2" height="1" fill="#ffee00"/>
<rect x="399" y="455" width="2" height="8" fill="#00ee00"/>
<rect x="403" y="455" width="2" height="8" fill="#00ee00"/>
<rect x="407" y="453" width="2" height="10" fill="#00ee00"/>
<rect x="412" y="432" width="2" height="31" fill="#ff9933"/>
<rect x="417" y="428" width="2" height="35" fill="#00ee00"/>
<rect x="421" y="442" width="2" height="21" fill="#00ee00"/>
<rect x="426" y="417" width="2" height="46" fill="#00ee00"/>
<rect x="430" y="444" width="2" height="19" fill="#ff9933"/>
<rect x="435" y="457" width="2" height="6" fill="#00ee00"/>
<rect x="439" y="457" width="2" height="6" fill="#ff9933"/>
<rect x="444" y="446" width="2" height="17" fill="#ff9933"/>
<rect x="448" y="457" width="2" height="6" fill="#00ee00"/>
<rect x="453" y="453" width="2" height="10" fill="#ff9933"/>
<rect x="457" y="462" width="2" height="1" fill="#ffee00"/>
<rect x="462" y="461" width="2" height="2" fill="#00ee00"/>
<rect x="466" y="461" width="2" height="2" fill="#ff9933"/>
<rect x="471" y="458" width="2" height="5" fill="#ff9933"/>
<rect x="476" y="459" width="2" height="4" fill="#ff9933"/>
<rect x="480" y="458" width="2" height="5" fill="#00ee00"/>
<rect x="485" y="455" width="2" height="8" fill="#ff9933"/>
<rect x="489" y="455" width="2" height="8" fill="#ff9933"/>
<rect x="494" y="461" width="2" height="2" fill="#00ee00"/>
<rect x="498" y="459" width="2" height="4" fill="#00ee00"/>
<rect x="503" y="461" width="2" height="2" fill="#00ee00"/>
<rect x="507" y="446" width="2" height="17" fill="#ff9933"/>
<rect x="512" y="456" width="2" height="7" fill="#00ee00"/>
<rect x="516" y="445" width="2" height="18" fill="#00ee00"/>
<rect x="521" y="427" width="2" height="36" fill="#00ee00"/>
<rect x="525" y="449" width="2" height="14" fill="#ff9933"/>
<rect x="530" y="455" width="2" height="8" fill="#ff9933"/>
<rect x="534" y="460" width="2" height="3" fill="#ff9933"/>
<rect x="539" y="445" width="2" height="18" fill="#00ee00"/>
<rect x="543" y="451" width="2" height="12" fill="#00ee00"/>
<rect x="548" y="436" width="2" height="27" fill="#ffee00"/>
<rect x="552" y="448" width="2" height="15" fill="#ff9933"/>
<rect x="557" y="461" width="2" height="2" fill="#ff9933"/>
<rect x="562" y="461" width="2" height="2" fill="#00ee00"/>
<rect x="566" y="461" width="2" height="2" fill="#ff9933"/>
<rect x="575" y="460" width="2" height="3" fill="#ff9933"/>
<rect x="580" y="459" width="2" height="4" fill="#ff9933"/>
<rect x="584" y="456" width="2" height="7" fill="#ff9933"/>
<rect x="589" y="459" width="2" height="4" fill="#ffee00"/>
<rect x="593" y="462" width="2" height="1" fill="#00ee00"/>
<rect x="598" y="460" width="2" height="3" fill="#ff9933"/>
<rect x="602" y="458" width="2" height="5" fill="#ffee00"/>
<rect x="607" y="459" width="2" height="4" fill="#ff9933"/>
<rect x="611" y="462" width="2" height="1" fill="#ff9933"/>
<rect x="616" y="460" width="2" height="3" fill="#00ee00"/>
<rect x="620" y="457" width="2" height="6" fill="#ff9933"/>
<rect x="629" y="453" width="2" height="10" fill="#00ee00"/>
<rect x="634" y="457" width="2" height="6" fill="#ff9933"/>
<rect x="638" y="457" width="2" height="6" fill="#ff9933"/>
<rect x="643" y="456" width="2" height="7" fill="#ff9933"/>
<rect x="647" y="445" width="2" height="18" fill="#ff9933"/>
<rect x="652" y="462" width="2" height="1" fill="#00ee00"/>
<rect x="657" y="459" width="2" height="4" fill="#ffee00"/>
<rect x="661" y="460" width="2" height="3" fill="#00ee00"/>
<rect x="666" y="459" width="2" height="4" fill="#ff9933"/>
<rect x="670" y="461" width="2" height="2" fill="#ffee00"/>
<rect x="679" y="459" width="2" height="4" fill="#ffee00"/>
<rect x="684" y="459" width="2" height="4" fill="#ff9933"/>
<rect x="688" y="457" width="2" height="6" fill="#ff9933"/>
<rect x="693" y="461" width="2" height="2" fill="#00ee00"/>
<rect x="697" y="460" width="2" height="3" fill="#ff9933"/>
<rect x="702" y="462" width="2" height="1" fill="#ffee00"/>
<rect x="706" y="462" width="2" height="1" fill="#00ee00"/>
<rect x="716" y="460" width="2" height="3" fill="#ffee00"/>
<rect x="720" y="451" width="2" height="12" fill="#00ee00"/>
<rect x="725" y="460" width="2" height="3" fill="#ff9933"/>
<rect x="729" y="462" width="2" height="1" fill="#00ee00"/>
<rect x="734" y="442" width="2" height="21" fill="#00ee00"/>
<rect x="738" y="460" width="2" height="3" fill="#00ee00"/>
<rect x="743" y="459" width="2" height="4" fill="#ffee00"/>
<rect x="747" y="456" width="2" height="7" fill="#ff9933"/>
<rect x="752" y="452" width="2" height="11" fill="#00ee00"/>
<rect x="756" y="449" width="2" height="14" fill="#00ee00"/>
<rect x="761" y="461" width="2" height="2" fill="#ff9933"/>
<rect x="765" y="461" width="2" height="2" fill="#ff9933"/>
<rect x="770" y="455" width="2" height="8" fill="#00ee00"/>
<rect x="774" y="451" width="2" height="12" fill="#00ee00"/>
<rect x="779" y="458" width="2" height="5" fill="#ff9933"/>
<rect x="788" y="460" width="2" height="3" fill="#ff9933"/>
<rect x="792" y="453" width="2" height="10" fill="#00ee00"/>
<rect x="797" y="460" width="2" height="3" fill="#ff9933"/>
<rect x="802" y="457" width="2" height="6" fill="#ff9933"/>
<rect x="811" y="456" width="2" height="7" fill="#ffee00"/>
<rect x="820" y="462" width="2" height="1" fill="#ffee00"/>
<rect x="824" y="460" width="2" height="3" fill="#00ee00"/>
<rect x="829" y="456" width="2" height="7" fill="#00ee00"/>
<rect x="833" y="445" width="2" height="18" fill="#00ee00"/>
<rect x="838" y="455" width="2" height="8" fill="#00ee00"/>
<rect x="842" y="448" width="2" height="15" fill="#ff9933"/>
<rect x="847" y="454" width="2" height="9" fill="#ffee00"/>
<rect x="851" y="462" width="2" height="1" fill="#ff9933"/>
<rect x="856" y="461" width="2" height="2" fill="#ffee00"/>
<rect x="860" y="458" width="2" height="5" fill="#ff9933"/>
<rect x="865" y="461" width="2" height="2" fill="#ff9933"/>
<rect x="874" y="460" width="2" height="3" fill="#ff9933"/>
<rect x="892" y="460" width="2" height="3" fill="#ff9933"/>
<rect x="897" y="461" width="2" height="2" fill="#ff9933"/>
<rect x="906" y="461" width="2" height="2" fill="#ff9933"/>
<rect x="919" y="460" width="2" height="3" fill="#ff9933"/>
<rect x="924" y="460" width="2" height="3" fill="#ff9933"/>
<rect x="933" y="462" width="2" height="1" fill="#00ee00"/>
<rect x="937" y="461" width="2" height="2" fill="#00ee00"/>
<rect x="942" y="461" width="2" height="2" fill="#ffee00"/>
<polyline points="75.0,525.5 79.4,525.5" fill="none" stroke="#1890e8" stroke-width="1.35" stroke-linejoin="round"/>
<polyline points="84.2,511.7 88.4,531.8" fill="none" stroke="#1890e8" stroke-width="1.35" stroke-linejoin="round"/>
<polyline points="93.2,528.5 97.6,525.5 102.4,530.8 107.6,524.1 112.0,526.0 116.7,531.8" fill="none" stroke="#1890e8" stroke-width="1.35" stroke-linejoin="round"/>
<polyline points="120.0,536.6 125.7,536.6" fill="none" stroke="#1890e8" stroke-width="1.35" stroke-linejoin="round"/>
<polyline points="129.2,536.6 134.9,517.0" fill="none" stroke="#1890e8" stroke-width="1.35" stroke-linejoin="round"/>
<polyline points="138.2,531.4 147.8,531.4" fill="none" stroke="#1890e8" stroke-width="1.35" stroke-linejoin="round"/>
<polyline points="152.4,523.3 157.2,503.0 161.5,486.1 165.8,492.7 170.7,501.3 174.4,500.4 179.3,506.4 183.9,497.8 188.2,494.4 197.7,488.4 202.3,493.5 206.8,485.4 211.0,483.7 215.4,480.3 220.1,489.2 224.4,504.4 229.6,504.4 233.9,495.8 238.5,488.4 243.0,494.4 247.6,509.4 251.6,509.4 256.6,503.3 260.6,513.3 265.2,513.3 274.3,503.3 278.6,503.3 292.4,520.2 297.1,503.3 301.6,503.3 310.5,514.2 315.5,514.2 319.5,488.4 324.6,486.1 328.6,517.6 333.8,512.5 337.6,510.2 342.7,515.4 347.0,515.4 351.3,518.2 355.6,509.0 360.8,512.5 364.8,515.4 369.4,513.3 373.7,519.4 396.1,519.4 405.6,509.9 410.4,499.2 414.5,516.8 418.9,497.8 423.3,489.2 428.5,488.4 432.6,507.7 437.1,504.2 446.4,528.5 450.9,518.2 455.5,520.2 459.5,520.2 464.7,516.3 469.3,519.4 473.6,523.3 478.4,526.3 482.6,523.2 491.2,533.1 496.9,528.5 505.5,522.3 509.6,525.4 514.4,515.9 518.2,503.5 523.4,497.5 528.2,502.1 536.5,508.2 541.1,497.8 545.4,492.3 550.3,492.3 554.4,510.2 559.6,520.2 564.4,518.2 568.2,520.2 573.4,515.4 577.8,521.6 582.5,526.3 586.8,528.3 591.6,528.3 595.7,525.4 600.6,531.4 604.9,531.4 613.5,537.1 618.3,523.2 622.4,532.3 627.3,528.3 631.6,515.4 639.8,531.4 645.0,538.3 650.5,544.3 654.3,540.4 659.0,540.4 663.4,532.3 668.1,535.4 672.4,535.4 677.2,523.2 681.3,523.2 686.2,532.3 690.5,535.4 695.3,520.2 699.6,528.3 704.3,528.3 708.6,521.4 717.2,521.4 722.3,508.2 726.6,516.4 731.0,510.8 735.6,507.3 740.4,497.5 745.2,497.5 749.4,506.4 754.2,495.3 758.9,489.6" fill="none" stroke="#1890e8" stroke-width="1.35" stroke-linejoin="round"/>
<polyline points="763.3,504.2 767.5,513.3 772.3,507.7 776.6,504.2 781.2,515.1 785.7,511.3 790.7,523.3 794.7,509.9" fill="none" stroke="#1890e8" stroke-width="1.35" stroke-linejoin="round"/>
<polyline points="799.5,518.2 804.2,522.3 808.5,526.3 821.5,526.3 830.4,515.6 835.3,506.9 840.4,499.3 844.5,506.1 849.4,506.1 853.7,510.3 858.3,510.3 862.6,514.6 867.2,524.4 871.3,524.4 876.4,533.6 880.5,529.4 885.5,532.5 889.7,532.5 898.4,552.4 903.2,533.3 907.3,539.1 911.9,539.1 917.2,542.4 926.4,548.3 930.3,528.4 934.9,523.8 939.1,518.2 944.3,518.2 948.6,515.3" fill="none" stroke="#1890e8" stroke-width="1.35" stroke-linejoin="round"/>
<polyline points="75.2,636.5 79.7,633.1" fill="none" stroke="#b888e8" stroke-width="1.3" stroke-linejoin="round"/>
<polyline points="84.0,633.1 88.8,636.5" fill="none" stroke="#b888e8" stroke-width="1.3" stroke-linejoin="round"/>
<polyline points="93.2,637.7 98.0,637.5 102.7,636.4 107.5,634.2 112.2,635.3 116.9,636.5" fill="none" stroke="#b888e8" stroke-width="1.3" stroke-linejoin="round"/>
<polyline points="120.2,637.2 125.7,639.6" fill="none" stroke="#b888e8" stroke-width="1.3" stroke-linejoin="round"/>
<polyline points="129.2,636.5 134.8,634.0" fill="none" stroke="#b888e8" stroke-width="1.3" stroke-linejoin="round"/>
<polyline points="138.2,637.7 143.2,636.2 147.8,637.7" fill="none" stroke="#b888e8" stroke-width="1.3" stroke-linejoin="round"/>
<polyline points="152.4,635.5 156.5,629.5 161.0,618.4 165.5,619.7 171.0,622.2 175.3,623.3 179.6,622.2 184.4,618.1 189.1,615.3 193.4,614.5 197.2,615.3 202.3,627.4 206.3,617.6 210.6,612.9 215.3,607.3 220.1,609.5 224.4,618.1 229.2,621.4 233.9,614.1 238.5,606.9 242.5,609.0 247.6,626.2 251.6,629.3 256.3,629.3 260.6,631.4 265.4,626.5 269.5,623.3 274.3,626.2 278.6,637.4 283.5,637.4 288.5,631.0 292.4,634.3 301.6,621.0 306.2,623.3 310.5,629.1 315.5,634.3 319.5,602.0 324.6,594.1 328.6,618.2 333.6,607.2 337.6,617.5 342.7,623.4 346.5,621.3 351.3,621.3 355.6,610.1 360.3,645.1 364.8,653.5 369.4,623.4 374.1,637.2 378.9,639.4 383.7,634.3 388.0,634.3 392.7,631.3 396.6,642.3 401.3,637.2 406.5,630.5 410.8,626.2 414.5,629.4 423.7,591.7 428.5,586.5 432.6,602.0 437.5,597.2 446.6,631.3 451.2,626.2 455.5,621.3 459.5,642.3 464.7,653.2 469.8,661.3 473.6,650.3 478.4,658.4 482.6,642.3 487.4,631.2 491.2,650.3 496.4,645.1 500.7,642.3 505.5,645.1 509.6,645.1 514.4,631.2 518.8,615.3 523.4,607.2 528.2,604.6 532.5,602.0 536.8,607.2 541.1,595.2 545.8,586.5 550.6,583.1 554.9,605.5 559.2,629.1 564.4,637.2 568.7,637.2 573.5,629.1 577.8,631.2 586.8,666.1 591.6,666.1 595.4,650.3 600.6,645.1 604.9,647.2 609.2,647.2 613.5,655.4 618.1,642.3 622.4,645.1 627.3,639.8 631.6,629.1 635.9,638.6 640.5,642.3 645.3,653.2 650.5,658.4 654.3,653.2 659.5,661.3 663.4,647.2 668.1,652.3 672.4,663.9 677.2,647.5 681.3,639.4 686.2,637.2 695.6,623.4 699.9,631.3 704.8,637.2 708.9,629.4 713.4,629.4 717.5,637.2 722.3,626.2 726.6,623.1 731.5,615.3 735.6,623.4 740.4,602.4 745.2,602.4 749.6,613.2 754.2,598.9 758.9,586.4" fill="none" stroke="#b888e8" stroke-width="1.3" stroke-linejoin="round"/>
<polyline points="763.3,607.2 767.5,610.7 772.3,607.9 776.6,605.5 781.2,629.1 785.7,623.4 790.4,631.3 794.7,629.4" fill="none" stroke="#b888e8" stroke-width="1.3" stroke-linejoin="round"/>
<polyline points="799.5,650.3 804.2,644.6 808.5,642.3 812.8,650.3 817.6,655.4 821.5,645.4 826.1,645.4 830.4,626.4 835.3,634.4 840.3,613.4 844.5,613.4 849.4,607.2 853.4,610.4 858.3,610.4 862.6,613.4 867.2,626.0 871.8,631.7 876.4,649.7 880.5,658.6 885.1,655.4 889.7,655.4 894.6,663.2 898.4,679.6 903.2,663.2 912.6,663.2 916.5,661.2 921.4,668.9 926.1,671.5 935.2,639.0 939.1,618.3 944.3,631.3 948.6,621.4" fill="none" stroke="#b888e8" stroke-width="1.3" stroke-linejoin="round"/>
<rect x="101" y="748" width="2" height="2" fill="#00ee00"/>
<rect x="106" y="748" width="2" height="2" fill="#00ee00"/>
<rect x="111" y="748" width="2" height="2" fill="#00ee00"/>
<rect x="116" y="748" width="2" height="2" fill="#00ee00"/>
<rect x="119" y="748" width="2" height="2" fill="#00ee00"/>
<rect x="125" y="748" width="2" height="2" fill="#00ee00"/>
<rect x="128" y="748" width="2" height="2" fill="#00ee00"/>
<rect x="134" y="748" width="2" height="2" fill="#00ee00"/>
<rect x="137" y="748" width="2" height="2" fill="#00ee00"/>
<rect x="142" y="748" width="2" height="2" fill="#00ee00"/>
<rect x="147" y="748" width="2" height="2" fill="#00ee00"/>
<rect x="151" y="748" width="2" height="2" fill="#00ee00"/>
<rect x="156" y="748" width="2" height="2" fill="#00ee00"/>
<rect x="160" y="743.2" width="2" height="5.2" fill="#00ee00"/>
<rect x="165" y="741.2" width="2" height="7.2" fill="#00ee00"/>
<rect x="169" y="740.6" width="2" height="7.8" fill="#00ee00"/>
<rect x="174" y="742.4" width="2" height="6.0" fill="#00ee00"/>
<rect x="178" y="741.5" width="2" height="6.9" fill="#00ee00"/>
<rect x="182" y="740.6" width="2" height="7.8" fill="#00ee00"/>
<rect x="187" y="739.8" width="2" height="8.6" fill="#00ee00"/>
<rect x="192" y="740.1" width="2" height="8.3" fill="#00ee00"/>
<rect x="196" y="739.4" width="2" height="9.0" fill="#00ee00"/>
<rect x="201" y="740.1" width="2" height="8.3" fill="#00ee00"/>
<rect x="205" y="738.9" width="2" height="9.5" fill="#00ee00"/>
<rect x="210" y="736.9" width="2" height="11.5" fill="#00ee00"/>
<rect x="214" y="735.8" width="2" height="12.6" fill="#00ee00"/>
<rect x="219" y="735.8" width="2" height="12.6" fill="#00ee00"/>
<rect x="223" y="738.9" width="2" height="9.5" fill="#00ee00"/>
<rect x="228" y="742.0" width="2" height="6.4" fill="#00ee00"/>
<rect x="232" y="742.0" width="2" height="6.4" fill="#00ee00"/>
<rect x="237" y="738.9" width="2" height="9.5" fill="#00ee00"/>
<rect x="242" y="738.9" width="2" height="9.5" fill="#00ee00"/>
<rect x="246" y="742.4" width="2" height="6.0" fill="#00ee00"/>
<rect x="251" y="745.3" width="2" height="3.1" fill="#00ee00"/>
<rect x="255" y="745.3" width="2" height="3.1" fill="#00ee00"/>
<rect x="264" y="748.4" width="2" height="1.5" fill="#00ee00"/>
<rect x="269" y="748.4" width="2" height="2.6" fill="#00ee00"/>
<rect x="273" y="748.4" width="2" height="1.5" fill="#00ee00"/>
<rect x="278" y="748.4" width="2" height="1.5" fill="#00ee00"/>
<rect x="282" y="748.4" width="2" height="1.7" fill="#00ee00"/>
<rect x="287" y="748.4" width="2" height="3.4" fill="#00ee00"/>
<rect x="291" y="748.4" width="2" height="5.5" fill="#00ee00"/>
<rect x="296" y="748.4" width="2" height="2.6" fill="#00ee00"/>
<rect x="300" y="748.4" width="2" height="1.5" fill="#00ee00"/>
<rect x="305" y="748.4" width="2" height="1.5" fill="#00ee00"/>
<rect x="309" y="748.4" width="2" height="2.6" fill="#00ee00"/>
<rect x="314" y="748.4" width="2" height="3.4" fill="#00ee00"/>
<rect x="318" y="743.2" width="2" height="5.2" fill="#00ee00"/>
<rect x="323" y="737.2" width="2" height="11.2" fill="#00ee00"/>
<rect x="327" y="741.2" width="2" height="7.2" fill="#00ee00"/>
<rect x="332" y="743.2" width="2" height="5.2" fill="#00ee00"/>
<rect x="337" y="743.2" width="2" height="5.2" fill="#00ee00"/>
<rect x="341" y="746.3" width="2" height="2.1" fill="#00ee00"/>
<rect x="350" y="748.4" width="2" height="2.6" fill="#00ee00"/>
<rect x="355" y="748.4" width="2" height="1.5" fill="#00ee00"/>
<rect x="359" y="748.4" width="2" height="1.5" fill="#00ee00"/>
<rect x="364" y="748.4" width="2" height="2.6" fill="#00ee00"/>
<rect x="368" y="748.4" width="2" height="2.6" fill="#00ee00"/>
<rect x="373" y="748.4" width="2" height="4.3" fill="#00ee00"/>
<rect x="377" y="748.4" width="2" height="5.5" fill="#00ee00"/>
<rect x="382" y="748.4" width="2" height="6.5" fill="#00ee00"/>
<rect x="386" y="748.4" width="2" height="7.7" fill="#00ee00"/>
<rect x="391" y="748.4" width="2" height="7.7" fill="#00ee00"/>
<rect x="395" y="748.4" width="2" height="7.2" fill="#00ee00"/>
<rect x="400" y="748.4" width="2" height="6.0" fill="#00ee00"/>
<rect x="404" y="748.4" width="2" height="5.2" fill="#00ee00"/>
<rect x="409" y="748.4" width="2" height="1.7" fill="#00ee00"/>
<rect x="413" y="748.4" width="2" height="2.6" fill="#00ee00"/>
<rect x="418" y="745.3" width="2" height="3.1" fill="#00ee00"/>
<rect x="423" y="737.2" width="2" height="11.2" fill="#00ee00"/>
<rect x="427" y="731.2" width="2" height="17.2" fill="#00ee00"/>
<rect x="432" y="734.3" width="2" height="14.1" fill="#00ee00"/>
<rect x="436" y="735.1" width="2" height="13.3" fill="#00ee00"/>
<rect x="441" y="740.1" width="2" height="8.3" fill="#00ee00"/>
<rect x="445" y="748.4" width="2" height="1.5" fill="#00ee00"/>
<rect x="450" y="748.4" width="2" height="2.6" fill="#00ee00"/>
<rect x="454" y="748.4" width="2" height="5.2" fill="#00ee00"/>
<rect x="459" y="748.4" width="2" height="6.5" fill="#00ee00"/>
<rect x="463" y="748.4" width="2" height="6.5" fill="#00ee00"/>
<rect x="468" y="748.4" width="2" height="6.5" fill="#00ee00"/>
<rect x="472" y="748.4" width="2" height="8.3" fill="#00ee00"/>
<rect x="477" y="748.4" width="2" height="10.3" fill="#00ee00"/>
<rect x="481" y="748.4" width="2" height="10.3" fill="#00ee00"/>
<rect x="486" y="748.4" width="2" height="11.7" fill="#00ee00"/>
<rect x="490" y="748.4" width="2" height="13.4" fill="#00ee00"/>
<rect x="495" y="748.4" width="2" height="13.4" fill="#00ee00"/>
<rect x="499" y="748.4" width="2" height="12.0" fill="#00ee00"/>
<rect x="504" y="748.4" width="2" height="9.5" fill="#00ee00"/>
<rect x="508" y="748.4" width="2" height="8.3" fill="#00ee00"/>
<rect x="513" y="748.4" width="2" height="5.2" fill="#00ee00"/>
<rect x="522" y="741.2" width="2" height="7.2" fill="#00ee00"/>
<rect x="527" y="738.1" width="2" height="10.3" fill="#00ee00"/>
<rect x="531" y="738.1" width="2" height="10.3" fill="#00ee00"/>
<rect x="536" y="738.9" width="2" height="9.5" fill="#00ee00"/>
<rect x="540" y="735.0" width="2" height="13.4" fill="#00ee00"/>
<rect x="545" y="731.2" width="2" height="17.2" fill="#00ee00"/>
<rect x="549" y="730.3" width="2" height="18.1" fill="#00ee00"/>
<rect x="554" y="734.3" width="2" height="14.1" fill="#00ee00"/>
<rect x="558" y="741.2" width="2" height="7.2" fill="#00ee00"/>
<rect x="563" y="745.0" width="2" height="3.4" fill="#00ee00"/>
<rect x="567" y="748.0" width="2" height="1.5" fill="#00ee00"/>
<rect x="572" y="748.4" width="2" height="1.5" fill="#00ee00"/>
<rect x="576" y="748.4" width="2" height="4.3" fill="#00ee00"/>
<rect x="581" y="748.4" width="2" height="7.2" fill="#00ee00"/>
<rect x="585" y="748.4" width="2" height="10.0" fill="#00ee00"/>
<rect x="590" y="748.4" width="2" height="11.2" fill="#00ee00"/>
<rect x="594" y="748.4" width="2" height="11.2" fill="#00ee00"/>
<rect x="599" y="748.4" width="2" height="12.0" fill="#00ee00"/>
<rect x="604" y="748.4" width="2" height="12.0" fill="#00ee00"/>
<rect x="608" y="748.4" width="2" height="12.9" fill="#00ee00"/>
<rect x="613" y="748.4" width="2" height="12.9" fill="#00ee00"/>
<rect x="617" y="748.4" width="2" height="10.3" fill="#00ee00"/>
<rect x="622" y="748.4" width="2" height="11.2" fill="#00ee00"/>
<rect x="626" y="748.4" width="2" height="9.5" fill="#00ee00"/>
<rect x="631" y="748.4" width="2" height="5.2" fill="#00ee00"/>
<rect x="635" y="748.4" width="2" height="5.2" fill="#00ee00"/>
<rect x="640" y="748.4" width="2" height="7.2" fill="#00ee00"/>
<rect x="644" y="748.4" width="2" height="10.0" fill="#00ee00"/>
<rect x="649" y="748.4" width="2" height="12.9" fill="#00ee00"/>
<rect x="653" y="748.4" width="2" height="15.1" fill="#00ee00"/>
<rect x="658" y="748.4" width="2" height="15.1" fill="#00ee00"/>
<rect x="662" y="748.4" width="2" height="12.0" fill="#00ee00"/>
<rect x="667" y="748.4" width="2" height="10.0" fill="#00ee00"/>
<rect x="671" y="748.4" width="2" height="7.7" fill="#00ee00"/>
<rect x="676" y="748.4" width="2" height="4.3" fill="#00ee00"/>
<rect x="680" y="748.4" width="2" height="1.5" fill="#00ee00"/>
<rect x="685" y="748.4" width="2" height="1.5" fill="#00ee00"/>
<rect x="689" y="748.4" width="2" height="2.1" fill="#00ee00"/>
<rect x="708" y="746.3" width="2" height="2.1" fill="#00ee00"/>
<rect x="712" y="745.3" width="2" height="3.1" fill="#00ee00"/>
<rect x="717" y="744.1" width="2" height="4.3" fill="#00ee00"/>
<rect x="721" y="740.1" width="2" height="8.3" fill="#00ee00"/>
<rect x="726" y="740.1" width="2" height="8.3" fill="#00ee00"/>
<rect x="730" y="738.1" width="2" height="10.3" fill="#00ee00"/>
<rect x="735" y="737.2" width="2" height="11.2" fill="#00ee00"/>
<rect x="739" y="733.2" width="2" height="15.2" fill="#00ee00"/>
<rect x="744" y="731.2" width="2" height="17.2" fill="#00ee00"/>
<rect x="748" y="732.0" width="2" height="16.4" fill="#00ee00"/>
<rect x="753" y="728.9" width="2" height="19.5" fill="#00ee00"/>
<rect x="757" y="725.1" width="2" height="23.3" fill="#00ee00"/>
<rect x="762" y="726.9" width="2" height="21.5" fill="#00ee00"/>
<rect x="766" y="732.0" width="2" height="16.4" fill="#00ee00"/>
<rect x="771" y="732.9" width="2" height="15.5" fill="#00ee00"/>
<rect x="775" y="734.3" width="2" height="14.1" fill="#00ee00"/>
<rect x="780" y="738.1" width="2" height="10.3" fill="#00ee00"/>
<rect x="785" y="740.1" width="2" height="8.3" fill="#00ee00"/>
<rect x="789" y="745.8" width="2" height="2.6" fill="#00ee00"/>
<rect x="794" y="745.0" width="2" height="3.4" fill="#00ee00"/>
<rect x="803" y="748.4" width="2" height="2.1" fill="#00ee00"/>
<rect x="807" y="748.4" width="2" height="6.0" fill="#00ee00"/>
<rect x="812" y="748.4" width="2" height="9.5" fill="#00ee00"/>
<rect x="816" y="748.4" width="2" height="10.3" fill="#00ee00"/>
<rect x="821" y="748.4" width="2" height="10.0" fill="#00ee00"/>
<rect x="825" y="748.4" width="2" height="9.5" fill="#00ee00"/>
<rect x="830" y="748.4" width="2" height="6.0" fill="#00ee00"/>
<rect x="834" y="748.4" width="2" height="1.5" fill="#00ee00"/>
<rect x="839" y="744.1" width="2" height="4.3" fill="#00ee00"/>
<rect x="843" y="741.8" width="2" height="6.6" fill="#00ee00"/>
<rect x="848" y="741.2" width="2" height="7.2" fill="#00ee00"/>
<rect x="852" y="741.8" width="2" height="6.6" fill="#00ee00"/>
<rect x="857" y="743.2" width="2" height="5.2" fill="#00ee00"/>
<rect x="861" y="745.3" width="2" height="3.1" fill="#00ee00"/>
<rect x="866" y="748.0" width="2" height="1.5" fill="#00ee00"/>
<rect x="870" y="748.4" width="2" height="3.1" fill="#00ee00"/>
<rect x="875" y="748.4" width="2" height="7.2" fill="#00ee00"/>
<rect x="880" y="748.4" width="2" height="9.5" fill="#00ee00"/>
<rect x="884" y="748.4" width="2" height="10.3" fill="#00ee00"/>
<rect x="889" y="748.4" width="2" height="11.7" fill="#00ee00"/>
<rect x="893" y="748.4" width="2" height="14.1" fill="#00ee00"/>
<rect x="898" y="748.4" width="2" height="20.3" fill="#00ee00"/>
<rect x="902" y="748.4" width="2" height="18.4" fill="#00ee00"/>
<rect x="907" y="748.4" width="2" height="19.4" fill="#00ee00"/>
<rect x="911" y="748.4" width="2" height="18.4" fill="#00ee00"/>
<rect x="916" y="748.4" width="2" height="18.4" fill="#00ee00"/>
<rect x="920" y="748.4" width="2" height="19.4" fill="#00ee00"/>
<rect x="925" y="748.4" width="2" height="20.3" fill="#00ee00"/>
<rect x="929" y="748.4" width="2" height="14.4" fill="#00ee00"/>
<rect x="934" y="748.4" width="2" height="8.3" fill="#00ee00"/>
<rect x="938" y="748.4" width="2" height="2.3" fill="#00ee00"/>
<rect x="943" y="747.6" width="2" height="1.5" fill="#00ee00"/>
<rect x="947" y="743.0" width="2" height="5.4" fill="#00ee00"/>
<polyline points="102.3,747.5 107.5,748.4 116.9,748.4" fill="none" stroke="#e81010" stroke-width="1.4" stroke-linejoin="round"/>
<polyline points="120.2,749.6 125.7,749.6" fill="none" stroke="#e81010" stroke-width="1.4" stroke-linejoin="round"/>
<polyline points="129.2,750.5 134.8,750.9" fill="none" stroke="#e81010" stroke-width="1.4" stroke-linejoin="round"/>
<polyline points="138.2,750.7 143.2,751.4 147.8,751.4" fill="none" stroke="#e81010" stroke-width="1.4" stroke-linejoin="round"/>
<polyline points="152.4,752.2 156.5,750.9 162.9,748.4 174.4,744.5 187.3,740.9 197.4,737.3 207.4,730.9 216.0,725.1 224.6,719.4 233.2,715.8 241.9,711.1 250.5,709.1 257.7,708.2 272.0,709.4 286.4,710.4 296.7,713.2 300.0,714.1 307.2,714.3 309.6,715.5 316.3,715.5 328.8,709.3 340.8,706.4 344.6,705.9 350.0,706.4 358.7,707.4 374.2,710.5 388.0,715.7 401.7,721.7 410.0,722.4 414.8,723.3 419.6,722.4 424.4,718.8 431.6,711.6 436.4,708.7 441.2,706.6 446.0,706.6 450.8,707.5 455.6,708.5 459.9,710.6 471.8,715.7 483.9,722.6 497.7,732.0 511.5,738.9 518.3,739.4 532.1,732.9 545.9,722.6 556.2,713.9 566.6,711.4 575.2,711.9 585.5,716.5 597.1,724.3 609.1,732.0 614.3,736.7 627.2,744.1 640.1,748.4 650.4,756.1 662.5,765.6 672.8,771.6 681.5,772.5 695.2,773.4 705.6,772.8 715.9,769.9 731.4,764.2 740.0,758.7 750.3,748.4 755.0,742.4 758.8,738.4" fill="none" stroke="#e81010" stroke-width="1.4" stroke-linejoin="round"/>
<polyline points="763.6,732.4 770.2,726.4 776.2,721.6 783.4,717.1 785.2,716.2 791.2,715.9 794.8,715.3" fill="none" stroke="#e81010" stroke-width="1.4" stroke-linejoin="round"/>
<polyline points="798.9,714.8 808.4,717.4 817.0,721.7 830.8,729.1 836.0,729.1 848.0,725.1 858.3,721.7 866.9,721.2 879.0,725.1 891.1,732.9 899.7,740.6 903.8,744.7 908.6,751.5 913.4,757.2 919.2,763.9 924.9,769.2 930.7,774.5 935.5,776.4 942.2,776.4 948.9,775.4" fill="none" stroke="#e81010" stroke-width="1.4" stroke-linejoin="round"/>
<polyline points="75.2,747.5 79.9,747.5" fill="none" stroke="#f0b860" stroke-width="1.3" stroke-linejoin="round"/>
<polyline points="84.2,747.5 88.8,748.6" fill="none" stroke="#f0b860" stroke-width="1.3" stroke-linejoin="round"/>
<polyline points="93.2,748.4 98.0,748.6 102.7,749.2 107.5,749.2 112.2,749.6 116.9,750.5" fill="none" stroke="#f0b860" stroke-width="1.3" stroke-linejoin="round"/>
<polyline points="120.2,751.4 125.7,751.4" fill="none" stroke="#f0b860" stroke-width="1.3" stroke-linejoin="round"/>
<polyline points="129.2,752.7 134.8,750.9" fill="none" stroke="#f0b860" stroke-width="1.3" stroke-linejoin="round"/>
<polyline points="138.2,751.4 143.2,752.2 147.8,752.7" fill="none" stroke="#f0b860" stroke-width="1.3" stroke-linejoin="round"/>
<polyline points="152.4,752.7 156.5,749.6 160.9,744.5 164.4,741.6 174.4,737.3 180.1,735.9 191.6,730.9 201.7,725.9 207.4,722.3 216.0,712.2 220.3,710.1 224.6,710.5 229.7,711.5 236.1,706.5 241.9,702.5 250.5,704.8 256.2,705.8 264.8,710.1 270.6,711.1 282.1,711.9 292.1,718.0 300.0,715.5 307.2,715.5 315.4,719.4 324.0,699.7 325.0,699.4 328.3,702.3 337.9,702.3 343.2,704.7 350.0,708.6 357.0,708.8 365.6,711.9 372.5,714.3 381.1,719.1 389.7,723.4 396.6,726.9 405.2,727.7 410.0,724.5 414.6,725.5 419.1,719.8 422.0,712.6 425.4,705.8 428.5,698.6 430.6,698.4 435.0,695.3 437.4,694.2 439.3,695.5 441.2,698.2 443.6,702.5 446.5,707.8 450.8,711.1 455.6,713.5 459.9,717.6 466.7,719.1 473.6,723.4 480.4,729.1 487.3,735.0 492.5,740.6 499.4,744.6 504.6,745.3 509.4,747.0 514.9,744.9 521.8,733.8 528.7,723.9 536.4,720.5 542.5,712.2 548.5,702.8 551.9,699.3 555.4,699.3 559.7,703.6 564.8,707.1 570.0,711.4 578.6,717.4 585.0,725.1 590.2,731.2 595.3,734.6 602.2,740.6 609.1,746.3 613.4,750.5 618.6,750.5 624.6,753.6 628.1,753.9 632.4,751.0 636.7,751.8 641.8,756.1 647.0,763.0 653.0,770.8 659.1,778.2 664.2,778.5 672.5,780.3 681.5,774.2 690.4,776.3 695.2,772.5 703.8,772.2 709.0,769.9 717.6,766.0 722.8,760.4 731.4,754.4 736.6,748.4 741.7,739.8 748.6,732.0 753.8,723.4 758.8,714.3" fill="none" stroke="#f0b860" stroke-width="1.3" stroke-linejoin="round"/>
<polyline points="763.0,711.4 769.0,711.4 772.6,710.5 776.5,706.0 781.0,708.4 785.8,708.4 790.6,714.7 794.8,712.3" fill="none" stroke="#f0b860" stroke-width="1.3" stroke-linejoin="round"/>
<polyline points="798.9,714.3 804.9,720.8 811.8,728.6 820.4,735.8 825.6,737.2 830.8,735.5 836.0,730.3 841.1,722.6 848.9,717.4 860.1,717.4 865.2,720.0 872.1,728.6 880.7,736.3 887.6,741.5 892.8,748.4 898.0,760.4 903.8,765.4 907.7,770.6 912.5,775.0 919.2,782.1 926.4,790.3 930.7,787.9 935.5,785.5 939.3,780.2 943.2,776.4 948.9,770.2" fill="none" stroke="#f0b860" stroke-width="1.3" stroke-linejoin="round"/>
<text x="83" y="368.8" font-family="Liberation Sans" font-size="10" fill="#f4f4f4" text-anchor="start" font-weight="bold" textLength="42.2" lengthAdjust="spacing" >Volumen</text>
<text x="82.5" y="479.9" font-family="Liberation Serif" font-size="10" fill="#f4f4f4" text-anchor="start" font-weight="bold" textLength="17.7" lengthAdjust="spacing" >RSI</text>
<rect x="117" y="475" width="17" height="2" fill="#1aa0f0"/>
<text x="138.5" y="480" font-family="Liberation Sans" font-size="10.5" fill="#f0f0f0" text-anchor="start" font-weight="normal" textLength="13.7" lengthAdjust="spacing" >(9)</text>
<g transform="translate(158.3,473)"><path d="M0.3,3.2 Q1,1.6 2,2 L3.6,3.4 L4.4,2.6 L2.8,1 Q3.8,-0.2 5.6,0.4 Q7,1.2 7,3 L8,7.8 L3.8,6.6 Q1.4,5.8 0.3,3.2 Z" fill="#9cc4ee" stroke="#0a1830" stroke-width="0.5"/></g>
<text x="82.5" y="590.8" font-family="Liberation Sans" font-size="10" fill="#f4f4f4" text-anchor="start" font-weight="bold" textLength="27.4" lengthAdjust="spacing" >Mntm</text>
<rect x="127" y="586" width="17" height="2" fill="#d8a8f8"/>
<text x="148.6" y="591" font-family="Liberation Sans" font-size="10.5" fill="#f0f0f0" text-anchor="start" font-weight="normal" textLength="13.7" lengthAdjust="spacing" >(9)</text>
<g transform="translate(168.4,584)"><path d="M0.3,3.2 Q1,1.6 2,2 L3.6,3.4 L4.4,2.6 L2.8,1 Q3.8,-0.2 5.6,0.4 Q7,1.2 7,3 L8,7.8 L3.8,6.6 Q1.4,5.8 0.3,3.2 Z" fill="#9cc4ee" stroke="#0a1830" stroke-width="0.5"/></g>
<text x="82.6" y="700.7" font-family="Liberation Sans" font-size="10" fill="#f4f4f4" text-anchor="start" font-weight="bold" textLength="28.9" lengthAdjust="spacing" >MACD</text>
<text x="127.9" y="700.7" font-family="Liberation Sans" font-size="10" fill="#f0f0f0" text-anchor="start" font-weight="normal" textLength="118.9" lengthAdjust="spacing" >(12, 26, 9 - EMA, EMA)</text>
<g transform="translate(252,693.5)"><path d="M0.3,3.2 Q1,1.6 2,2 L3.6,3.4 L4.4,2.6 L2.8,1 Q3.8,-0.2 5.6,0.4 Q7,1.2 7,3 L8,7.8 L3.8,6.6 Q1.4,5.8 0.3,3.2 Z" fill="#9cc4ee" stroke="#0a1830" stroke-width="0.5"/></g>
<rect x="281" y="696" width="17" height="2" fill="#f0c070"/>
<text x="302.6" y="700.6" font-family="Liberation Sans" font-size="10" fill="#f0f0f0" text-anchor="start" font-weight="normal" textLength="31.5" lengthAdjust="spacing" >MACD</text>
<rect x="339.9" y="693.7" width="8.3" height="8.3" fill="#e8eaf8" stroke="#000" stroke-width="0.8"/>
<path d="M341.5,697.4000000000001 L343.59999999999997,700.4000000000001 L346.59999999999997,696.2" fill="none" stroke="#1464e0" stroke-width="1.8"/>
<rect x="354" y="696" width="17" height="2" fill="#00e000"/>
<text x="375.8" y="700.6" font-family="Liberation Sans" font-size="10" fill="#f0f0f0" text-anchor="start" font-weight="normal" textLength="31.3" lengthAdjust="spacing" >OSMA</text>
<rect x="412.8" y="693.7" width="8.3" height="8.3" fill="#e8eaf8" stroke="#000" stroke-width="0.8"/>
<path d="M414.40000000000003,697.4000000000001 L416.5,700.4000000000001 L419.5,696.2" fill="none" stroke="#1464e0" stroke-width="1.8"/>
<rect x="427.2" y="696" width="17" height="2" fill="#e81010"/>
<text x="449" y="700.6" font-family="Liberation Sans" font-size="10" fill="#f0f0f0" text-anchor="start" font-weight="normal" textLength="40.7" lengthAdjust="spacing" >SIGNAL</text>
<rect x="494.9" y="693.7" width="8.3" height="8.3" fill="#e8eaf8" stroke="#000" stroke-width="0.8"/>
<path d="M496.5,697.4000000000001 L498.59999999999997,700.4000000000001 L501.59999999999997,696.2" fill="none" stroke="#1464e0" stroke-width="1.8"/>
<rect x="865" y="315" width="17" height="2.2" fill="#20e8c8"/>
<text x="885.5" y="319.8" font-family="Liberation Sans" font-size="10" fill="#f4f4f4" text-anchor="start" font-weight="bold" textLength="50.5" lengthAdjust="spacing" >EAR@ASX</text>
<g transform="translate(942.5,313.5)"><path d="M0.3,3.2 Q1,1.6 2,2 L3.6,3.4 L4.4,2.6 L2.8,1 Q3.8,-0.2 5.6,0.4 Q7,1.2 7,3 L8,7.8 L3.8,6.6 Q1.4,5.8 0.3,3.2 Z" fill="#9cc4ee" stroke="#0a1830" stroke-width="0.5"/></g>
<path d="M865,329 H882" stroke="#808080" stroke-width="2" stroke-dasharray="4,2.5"/>
<text x="886.5" y="332.8" font-family="Liberation Sans" font-size="10" fill="#f0f0f0" text-anchor="start" font-weight="normal" textLength="54.7" lengthAdjust="spacing" >Prior Close</text>
<rect x="946.8" y="326.1" width="8.3" height="8.3" fill="#e8eaf8" stroke="#000" stroke-width="0.8"/>
<path d="M948.4,329.8 L950.5,332.8 L953.5,328.6" fill="none" stroke="#1464e0" stroke-width="1.8"/>
<path d="M945.6,51.5 H954.6 V54.6 L950.1,59.2 L945.6,54.6 Z" fill="#b8d8ff" stroke="#1e7cf8" stroke-width="1.2"/>
<path d="M946.8,52.8 H953.4 M946.8,53 L950,57.5" stroke="#f4f8ff" stroke-width="1" fill="none"/>
<path d="M945.6,353 H954.6 V349.8 L950.1,345.6 L945.6,349.8 Z" fill="#b8d8ff" stroke="#1e7cf8" stroke-width="1.2"/>
<path d="M946.8,351.8 H953.4 M946.8,350 L950,347" stroke="#f4f8ff" stroke-width="1" fill="none"/>
<rect x="5" y="61" width="9" height="265" fill="#222"/>
<rect x="5" y="52" width="9" height="9" fill="#c8c8c8"/>
<path d="M6.8,59 L9.5,54.3 L12.2,59 Z" fill="#102040"/>
<rect x="5" y="326" width="9" height="9" fill="#c8c8c8"/>
<path d="M6.8,328 L9.5,332.7 L12.2,328 Z" fill="#102040"/>
<rect x="5" y="148" width="9" height="92" fill="#4a4a4a"/>
<rect x="5" y="148" width="9" height="1.5" fill="#e8e8e8"/><rect x="5" y="150.5" width="9" height="1.5" fill="#c0c0c0"/>
<rect x="5" y="236" width="9" height="1.5" fill="#e8e8e8"/><rect x="5" y="238.5" width="9" height="1.5" fill="#c0c0c0"/>
<rect x="5.5" y="149" width="1" height="89" fill="#888"/>
<path d="M6,342 V340 Q6,338 9.5,338 Q13,338 13,341 V345" fill="none" stroke="#e0e0e0" stroke-width="1.6"/>
<rect x="5" y="345" width="9" height="7" fill="#d8d8d8"/><rect x="8.8" y="346.5" width="1.5" height="4.5" fill="#222"/>
<path d="M6.3,360.8 L12.7,367.59999999999997 M12.7,360.8 L6.3,367.59999999999997" stroke="#d4d4d4" stroke-width="2.8" stroke-linecap="round"/>
<path d="M6.3,470.70000000000005 L12.7,477.5 M12.7,470.70000000000005 L6.3,477.5" stroke="#d4d4d4" stroke-width="2.8" stroke-linecap="round"/>
<path d="M6.3,580.7 L12.7,587.5 M12.7,580.7 L6.3,587.5" stroke="#d4d4d4" stroke-width="2.8" stroke-linecap="round"/>
<path d="M6.3,690.7 L12.7,697.5 M12.7,690.7 L6.3,697.5" stroke="#d4d4d4" stroke-width="2.8" stroke-linecap="round"/>
<rect x="1" y="818" width="1040" height="9" fill="#1e1e1e"/>
<rect x="1" y="827" width="1040" height="1" fill="#40384a"/>
<rect x="1" y="828" width="1040" height="1" fill="#f4ecff"/>
<rect x="2" y="818.5" width="9" height="8.5" fill="#c8c8c8"/>
<path d="M4,822.7 L8.5,820 V825.4 Z" fill="#102040"/>
<rect x="1031" y="818.5" width="9" height="8.5" fill="#c8c8c8"/>
<path d="M1038,822.7 L1033.5,820 V825.4 Z" fill="#102040"/>
<rect x="868.5" y="819" width="1.5" height="8" fill="#e8e8e8"/><rect x="870.5" y="819" width="1.5" height="8" fill="#a0a0a0"/>
<rect x="1028" y="819" width="1.5" height="8" fill="#e8e8e8"/>
<text x="11.5" y="826.3" font-family="Liberation Sans" font-size="10" fill="#f0f0f0" text-anchor="start" font-weight="normal" textLength="42.5" lengthAdjust="spacing" >'07/21/06</text>
<text x="155.5" y="826.3" font-family="Liberation Sans" font-size="10" fill="#f0f0f0" text-anchor="start" font-weight="normal" textLength="44" lengthAdjust="spacing" >'03/26/07</text>
<text x="302" y="826.3" font-family="Liberation Sans" font-size="10" fill="#f0f0f0" text-anchor="start" font-weight="normal" textLength="45" lengthAdjust="spacing" >'11/29/07</text>
<text x="448" y="826.3" font-family="Liberation Sans" font-size="10" fill="#f0f0f0" text-anchor="start" font-weight="normal" textLength="44" lengthAdjust="spacing" >'08/03/08</text>
<text x="594.8" y="826.3" font-family="Liberation Sans" font-size="10" fill="#f0f0f0" text-anchor="start" font-weight="normal" textLength="43.2" lengthAdjust="spacing" >'04/08/09</text>
<text x="741.4" y="826.3" font-family="Liberation Sans" font-size="10" fill="#f0f0f0" text-anchor="start" font-weight="normal" textLength="43.6" lengthAdjust="spacing" >'12/12/09</text>
<text x="874" y="826.3" font-family="Liberation Sans" font-size="10" fill="#f0f0f0" text-anchor="start" font-weight="normal" textLength="44" lengthAdjust="spacing" >'08/17/10</text>
<text x="996" y="826.3" font-family="Liberation Sans" font-size="10" fill="#f0f0f0" text-anchor="start" font-weight="normal" textLength="32" lengthAdjust="spacing" >'04/22/</text>
</svg>
</body></html>
